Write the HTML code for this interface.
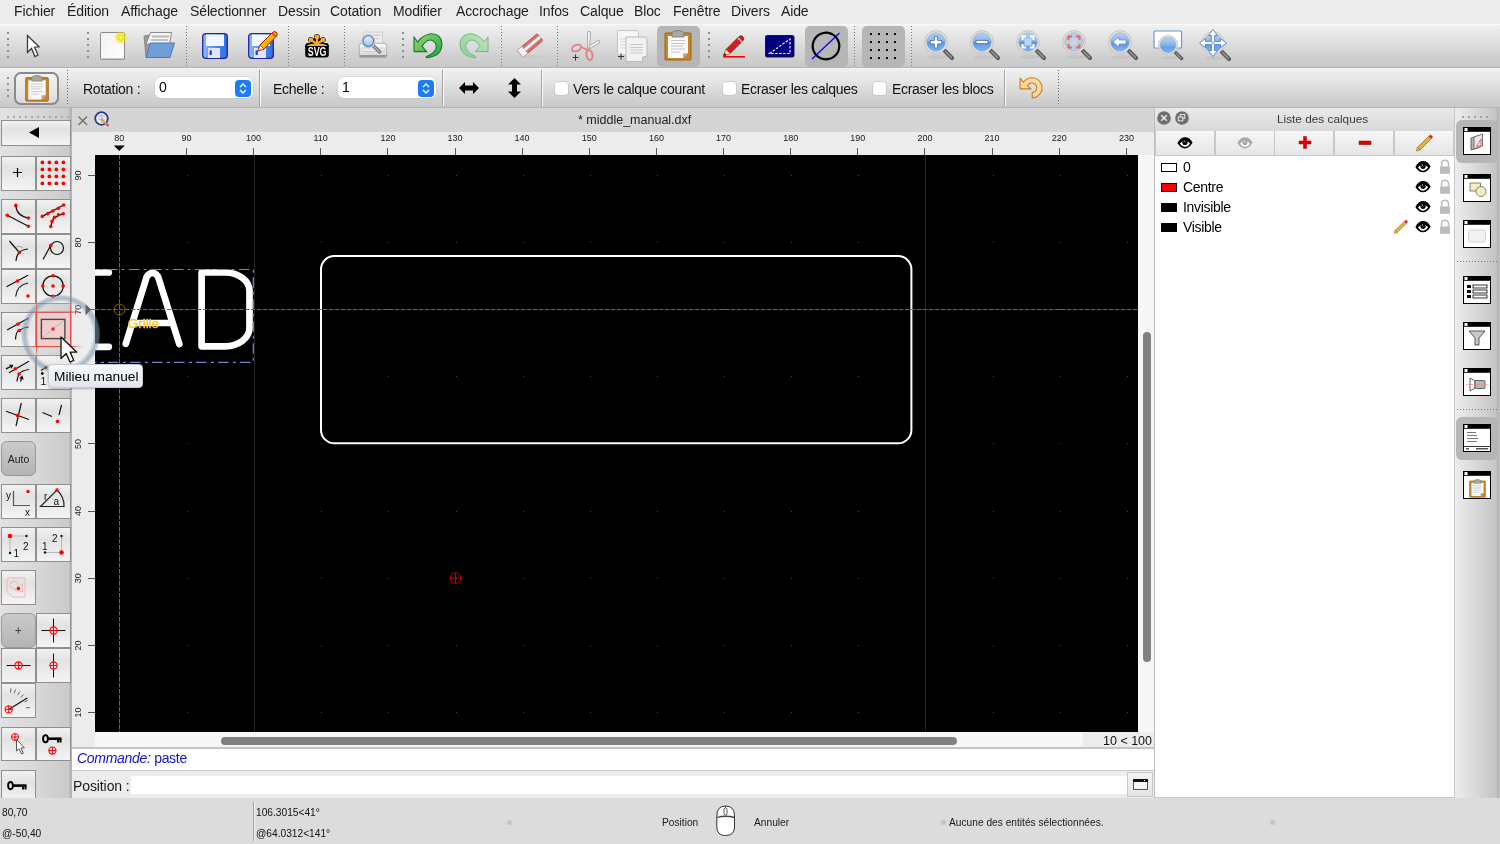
<!DOCTYPE html><html><head><meta charset="utf-8"><style>
html,body{margin:0;padding:0;width:1500px;height:844px;overflow:hidden;background:#e9e9e9;font-family:"Liberation Sans",sans-serif;position:relative}
.t,svg{will-change:transform}
</style></head><body>
<div style="position:absolute;left:0px;top:0px;width:1500px;height:24px;background:#ececec"></div>
<div class="t" style="position:absolute;left:14.3px;top:4px;font-size:14px;line-height:1;white-space:nowrap;letter-spacing:-0.12px;color:#1d1d1d">Fichier</div>
<div class="t" style="position:absolute;left:66.7px;top:4px;font-size:14px;line-height:1;white-space:nowrap;letter-spacing:-0.12px;color:#1d1d1d">Édition</div>
<div class="t" style="position:absolute;left:120.7px;top:4px;font-size:14px;line-height:1;white-space:nowrap;letter-spacing:-0.12px;color:#1d1d1d">Affichage</div>
<div class="t" style="position:absolute;left:190.3px;top:4px;font-size:14px;line-height:1;white-space:nowrap;letter-spacing:-0.12px;color:#1d1d1d">Sélectionner</div>
<div class="t" style="position:absolute;left:277.7px;top:4px;font-size:14px;line-height:1;white-space:nowrap;letter-spacing:-0.12px;color:#1d1d1d">Dessin</div>
<div class="t" style="position:absolute;left:330.3px;top:4px;font-size:14px;line-height:1;white-space:nowrap;letter-spacing:-0.12px;color:#1d1d1d">Cotation</div>
<div class="t" style="position:absolute;left:393.3px;top:4px;font-size:14px;line-height:1;white-space:nowrap;letter-spacing:-0.12px;color:#1d1d1d">Modifier</div>
<div class="t" style="position:absolute;left:455.7px;top:4px;font-size:14px;line-height:1;white-space:nowrap;letter-spacing:-0.12px;color:#1d1d1d">Accrochage</div>
<div class="t" style="position:absolute;left:539.3px;top:4px;font-size:14px;line-height:1;white-space:nowrap;letter-spacing:-0.12px;color:#1d1d1d">Infos</div>
<div class="t" style="position:absolute;left:580px;top:4px;font-size:14px;line-height:1;white-space:nowrap;letter-spacing:-0.12px;color:#1d1d1d">Calque</div>
<div class="t" style="position:absolute;left:634.3px;top:4px;font-size:14px;line-height:1;white-space:nowrap;letter-spacing:-0.12px;color:#1d1d1d">Bloc</div>
<div class="t" style="position:absolute;left:673.3px;top:4px;font-size:14px;line-height:1;white-space:nowrap;letter-spacing:-0.12px;color:#1d1d1d">Fenêtre</div>
<div class="t" style="position:absolute;left:731px;top:4px;font-size:14px;line-height:1;white-space:nowrap;letter-spacing:-0.12px;color:#1d1d1d">Divers</div>
<div class="t" style="position:absolute;left:781px;top:4px;font-size:14px;line-height:1;white-space:nowrap;letter-spacing:-0.12px;color:#1d1d1d">Aide</div>
<div style="position:absolute;left:0px;top:24px;width:1500px;height:43px;background:linear-gradient(#f0f0f0,#e4e4e4 30%,#d2d2d2 70%,#c8c8c8);border-top:1px solid #f8f8f8;box-sizing:border-box"></div>
<div style="position:absolute;left:0px;top:67px;width:1500px;height:1px;background:#b4b4b4"></div>
<div style="position:absolute;left:0px;top:68px;width:1500px;height:39px;background:linear-gradient(#f0f0f0,#e6e6e6 30%,#d4d4d4 70%,#c8c8c8);border-top:1px solid #f4f4f4;box-sizing:border-box"></div>
<div style="position:absolute;left:0px;top:107px;width:1500px;height:1px;background:#b6b6b6"></div>
<div style="position:absolute;left:7px;top:32px;width:2px;height:2px;background:#8e8e8e"></div>
<div style="position:absolute;left:7px;top:38px;width:2px;height:2px;background:#8e8e8e"></div>
<div style="position:absolute;left:7px;top:44px;width:2px;height:2px;background:#8e8e8e"></div>
<div style="position:absolute;left:7px;top:50px;width:2px;height:2px;background:#8e8e8e"></div>
<div style="position:absolute;left:7px;top:56px;width:2px;height:2px;background:#8e8e8e"></div>
<svg style="position:absolute;left:25px;top:33px;" width="16" height="26" viewBox="0 0 16 26"><path d="M2.5,2.5 L2.5,19.5 L6.5,15.5 L10,23.5 L13,22 L9.5,14.2 L14,13.8 Z" fill="#fff" stroke="#3a3a3a" stroke-width="1.3" stroke-linejoin="miter"/></svg>
<div style="position:absolute;left:87px;top:32px;width:2px;height:2px;background:#8e8e8e"></div>
<div style="position:absolute;left:87px;top:38px;width:2px;height:2px;background:#8e8e8e"></div>
<div style="position:absolute;left:87px;top:44px;width:2px;height:2px;background:#8e8e8e"></div>
<div style="position:absolute;left:87px;top:50px;width:2px;height:2px;background:#8e8e8e"></div>
<div style="position:absolute;left:87px;top:56px;width:2px;height:2px;background:#8e8e8e"></div>
<svg style="position:absolute;left:98px;top:30px;" width="30" height="32" viewBox="0 0 30 32"><defs><radialGradient id="glow"><stop offset="0" stop-color="#fffde0"/><stop offset="0.35" stop-color="#f4e400"/><stop offset="1" stop-color="#f4e400" stop-opacity="0"/></radialGradient><linearGradient id="pg" x1="0" y1="0" x2="1" y2="1"><stop offset="0" stop-color="#f0f0f0"/><stop offset="1" stop-color="#ffffff"/></linearGradient></defs><rect x="2.5" y="2.5" width="24" height="27" fill="url(#pg)" stroke="#8a8a8a" stroke-width="1" rx="1"/><rect x="3" y="28.5" width="23" height="1.5" fill="#9a9a9a"/><circle cx="23" cy="7.6" r="7" fill="url(#glow)"/></svg>
<svg style="position:absolute;left:141px;top:30px;" width="36" height="30" viewBox="0 0 36 30"><path d="M3,6 L9,5 L10,27 L5,27 Z" fill="#9c9c9c" stroke="#7a7a7a" stroke-width="0.8"/><path d="M9.5,2.5 L30.5,2.5 L28.5,14 L5,14 Z" fill="#f4f4f4" stroke="#8a8a8a" stroke-width="1"/><rect x="11" y="5.5" width="17" height="2" fill="#b8b8b8"/><rect x="10" y="9" width="17" height="2" fill="#c4c4c4"/><path d="M9.5,13 L33.5,13 L29,27.5 L5,27.5 Z" fill="#6e9fd6" stroke="#4a7ab8" stroke-width="1"/></svg>
<svg style="position:absolute;left:186px;top:26px;" width="1" height="41" viewBox="0 0 1 41"><rect x="0" y="0" width="1" height="1" fill="#7a7a7a"/><rect x="0" y="3" width="1" height="1" fill="#7a7a7a"/><rect x="0" y="6" width="1" height="1" fill="#7a7a7a"/><rect x="0" y="9" width="1" height="1" fill="#7a7a7a"/><rect x="0" y="12" width="1" height="1" fill="#7a7a7a"/><rect x="0" y="15" width="1" height="1" fill="#7a7a7a"/><rect x="0" y="18" width="1" height="1" fill="#7a7a7a"/><rect x="0" y="21" width="1" height="1" fill="#7a7a7a"/><rect x="0" y="24" width="1" height="1" fill="#7a7a7a"/><rect x="0" y="27" width="1" height="1" fill="#7a7a7a"/><rect x="0" y="30" width="1" height="1" fill="#7a7a7a"/><rect x="0" y="33" width="1" height="1" fill="#7a7a7a"/><rect x="0" y="36" width="1" height="1" fill="#7a7a7a"/><rect x="0" y="39" width="1" height="1" fill="#7a7a7a"/></svg>
<svg style="position:absolute;left:202px;top:33px" width="26" height="26" viewBox="0 0 26 26"><defs><linearGradient id="fb" x1="0" x2="1"><stop offset="0" stop-color="#8cbcf8"/><stop offset="0.5" stop-color="#4e8ef0"/><stop offset="1" stop-color="#2f6ee6"/></linearGradient></defs><rect x="0.7" y="0.7" width="24.6" height="24.6" rx="3" fill="url(#fb)" stroke="#2424a0" stroke-width="1.3"/><rect x="4" y="1.5" width="18" height="11.5" fill="#f4f6ff"/><rect x="6" y="15" width="12" height="10" fill="#e4e4ec"/><rect x="7.6" y="17.4" width="2.2" height="4.6" fill="#1e3ee0"/></svg>
<svg style="position:absolute;left:248px;top:33px" width="26" height="26" viewBox="0 0 26 26"><defs><linearGradient id="fb" x1="0" x2="1"><stop offset="0" stop-color="#8cbcf8"/><stop offset="0.5" stop-color="#4e8ef0"/><stop offset="1" stop-color="#2f6ee6"/></linearGradient></defs><rect x="0.7" y="0.7" width="24.6" height="24.6" rx="3" fill="url(#fb)" stroke="#2424a0" stroke-width="1.3"/><rect x="4" y="1.5" width="18" height="11.5" fill="#f4f6ff"/><rect x="6" y="15" width="12" height="10" fill="#e4e4ec"/><rect x="7.6" y="17.4" width="2.2" height="4.6" fill="#1e3ee0"/></svg>
<svg style="position:absolute;left:256px;top:30px;" width="22" height="24" viewBox="0 0 22 24"><path d="M2,21 L4,15 L17,2 Q19,1 20.5,2.5 Q22,4 20.5,6 L8,19 Z" fill="#f7b500" stroke="#a02000" stroke-width="1"/><path d="M2,21 L4,15 L8,19 Z" fill="#f5e0c0" stroke="#a02000" stroke-width="0.6"/><path d="M16,3 L20,7" stroke="#e05030" stroke-width="2"/></svg>
<svg style="position:absolute;left:288px;top:26px;" width="1" height="41" viewBox="0 0 1 41"><rect x="0" y="0" width="1" height="1" fill="#7a7a7a"/><rect x="0" y="3" width="1" height="1" fill="#7a7a7a"/><rect x="0" y="6" width="1" height="1" fill="#7a7a7a"/><rect x="0" y="9" width="1" height="1" fill="#7a7a7a"/><rect x="0" y="12" width="1" height="1" fill="#7a7a7a"/><rect x="0" y="15" width="1" height="1" fill="#7a7a7a"/><rect x="0" y="18" width="1" height="1" fill="#7a7a7a"/><rect x="0" y="21" width="1" height="1" fill="#7a7a7a"/><rect x="0" y="24" width="1" height="1" fill="#7a7a7a"/><rect x="0" y="27" width="1" height="1" fill="#7a7a7a"/><rect x="0" y="30" width="1" height="1" fill="#7a7a7a"/><rect x="0" y="33" width="1" height="1" fill="#7a7a7a"/><rect x="0" y="36" width="1" height="1" fill="#7a7a7a"/><rect x="0" y="39" width="1" height="1" fill="#7a7a7a"/></svg>
<svg style="position:absolute;left:302px;top:30px;" width="30" height="30" viewBox="0 0 30 30"><rect x="3.2" y="13" width="23.6" height="14.5" rx="3" fill="#000"/><g stroke="#000" stroke-width="5.6" stroke-linecap="round"><line x1="15" y1="14" x2="8.9" y2="9.9"/><line x1="15" y1="14" x2="15" y2="6.9"/><line x1="15" y1="14" x2="20.9" y2="9.9"/></g><path d="M2.8,17 Q4,12.5 15,12 Q26,12.5 27.2,17 Z" fill="#000"/><g stroke="#f6aa32" stroke-width="2.3" stroke-linecap="round"><line x1="15" y1="14" x2="8.9" y2="9.9"/><line x1="15" y1="14" x2="15" y2="6.9"/><line x1="15" y1="14" x2="20.9" y2="9.9"/></g><circle cx="8.9" cy="9.9" r="2.4" fill="#f6aa32"/><circle cx="15" cy="6.9" r="2.4" fill="#f6aa32"/><circle cx="20.9" cy="9.9" r="2.4" fill="#f6aa32"/><path d="M4.6,16.1 Q6,14 15,13.6 Q24,14 25.6,16.1 Z" fill="#f6aa32"/><text x="15.1" y="26.3" text-anchor="middle" font-family="Liberation Sans" font-weight="bold" font-size="12.8" fill="#fff" textLength="18.8" lengthAdjust="spacingAndGlyphs">SVG</text></svg>
<svg style="position:absolute;left:344px;top:26px;" width="1" height="41" viewBox="0 0 1 41"><rect x="0" y="0" width="1" height="1" fill="#7a7a7a"/><rect x="0" y="3" width="1" height="1" fill="#7a7a7a"/><rect x="0" y="6" width="1" height="1" fill="#7a7a7a"/><rect x="0" y="9" width="1" height="1" fill="#7a7a7a"/><rect x="0" y="12" width="1" height="1" fill="#7a7a7a"/><rect x="0" y="15" width="1" height="1" fill="#7a7a7a"/><rect x="0" y="18" width="1" height="1" fill="#7a7a7a"/><rect x="0" y="21" width="1" height="1" fill="#7a7a7a"/><rect x="0" y="24" width="1" height="1" fill="#7a7a7a"/><rect x="0" y="27" width="1" height="1" fill="#7a7a7a"/><rect x="0" y="30" width="1" height="1" fill="#7a7a7a"/><rect x="0" y="33" width="1" height="1" fill="#7a7a7a"/><rect x="0" y="36" width="1" height="1" fill="#7a7a7a"/><rect x="0" y="39" width="1" height="1" fill="#7a7a7a"/></svg>
<svg style="position:absolute;left:356px;top:30px;" width="34" height="32" viewBox="0 0 34 32"><defs><linearGradient id="prb" x1="0" y1="0" x2="0" y2="1"><stop offset="0" stop-color="#fafafa"/><stop offset="0.55" stop-color="#e8e8e8"/><stop offset="1" stop-color="#c8c8c8"/></linearGradient><linearGradient id="lens" x1="0" y1="0" x2="0" y2="1"><stop offset="0" stop-color="#e8f0fa"/><stop offset="1" stop-color="#a8c0dc"/></linearGradient></defs><rect x="7.2" y="2.1" width="19.3" height="13" rx="1" fill="#ececec" stroke="#c4c4c4" stroke-width="0.8"/><rect x="17" y="4.5" width="7" height="1.5" fill="#cfcfcf"/><rect x="17" y="8" width="6" height="1.5" fill="#d4d4d4"/><path d="M3.2,16 Q3.2,13.3 6,13.3 L28,13.3 Q30.7,13.3 30.7,16 L30.7,25.5 Q30.7,27.3 28.5,27.3 L5.5,27.3 Q3.2,27.3 3.2,25.5 Z" fill="url(#prb)" stroke="#a0a0a0" stroke-width="0.8"/><rect x="5" y="18" width="24" height="3.5" rx="1.5" fill="none" stroke="#c8c8c8" stroke-width="0.8"/><rect x="3.6" y="25" width="26.8" height="2.3" fill="#9a9a9a"/><line x1="17" y1="15.5" x2="23.5" y2="21.8" stroke="#707070" stroke-width="3.6" stroke-linecap="round"/><line x1="17" y1="15.5" x2="23.5" y2="21.8" stroke="#b4b4b4" stroke-width="1.6" stroke-linecap="round"/><circle cx="12.3" cy="11" r="6.6" fill="#f0f0f0" stroke="#b8b8b8" stroke-width="0.8"/><circle cx="12.3" cy="11" r="5.3" fill="url(#lens)" stroke="#4a84cc" stroke-width="1.2"/></svg>
<div style="position:absolute;left:402px;top:32px;width:2px;height:2px;background:#8e8e8e"></div>
<div style="position:absolute;left:402px;top:38px;width:2px;height:2px;background:#8e8e8e"></div>
<div style="position:absolute;left:402px;top:44px;width:2px;height:2px;background:#8e8e8e"></div>
<div style="position:absolute;left:402px;top:50px;width:2px;height:2px;background:#8e8e8e"></div>
<div style="position:absolute;left:402px;top:56px;width:2px;height:2px;background:#8e8e8e"></div>
<svg style="position:absolute;left:410px;top:30px;" width="36" height="32" viewBox="0 0 36 32"><defs><linearGradient id="ug" x1="0" y1="0" x2="1" y2="1"><stop offset="0" stop-color="#98d878"/><stop offset="1" stop-color="#28a040"/></linearGradient></defs><path d="M4,7.2 L7.8,12 Q12,5.5 20.5,3.8 Q31,3.5 32,13.5 Q32,23 24,26 Q20,27.6 16.5,27.8 Q15.8,27.2 16.3,26.6 Q23,24.5 26,19 Q27.5,12 21,10 Q16,9.5 12,16.4 L16.7,21.6 L4,21.6 Z" fill="url(#ug)" stroke="#127a2a" stroke-width="1.1" stroke-linejoin="miter"/></svg>
<svg style="position:absolute;left:456px;top:30px;" width="36" height="32" viewBox="0 0 36 32"><defs><linearGradient id="rg" x1="0" y1="0" x2="1" y2="1"><stop offset="0" stop-color="#c4e8c0"/><stop offset="1" stop-color="#8ccc96"/></linearGradient></defs><g transform="translate(36,0) scale(-1,1)"><path d="M4,7.2 L7.8,12 Q12,5.5 20.5,3.8 Q31,3.5 32,13.5 Q32,23 24,26 Q20,27.6 16.5,27.8 Q15.8,27.2 16.3,26.6 Q23,24.5 26,19 Q27.5,12 21,10 Q16,9.5 12,16.4 L16.7,21.6 L4,21.6 Z" fill="url(#rg)" stroke="#6cb87c" stroke-width="1"/></g></svg>
<svg style="position:absolute;left:501px;top:26px;" width="1" height="41" viewBox="0 0 1 41"><rect x="0" y="0" width="1" height="1" fill="#7a7a7a"/><rect x="0" y="3" width="1" height="1" fill="#7a7a7a"/><rect x="0" y="6" width="1" height="1" fill="#7a7a7a"/><rect x="0" y="9" width="1" height="1" fill="#7a7a7a"/><rect x="0" y="12" width="1" height="1" fill="#7a7a7a"/><rect x="0" y="15" width="1" height="1" fill="#7a7a7a"/><rect x="0" y="18" width="1" height="1" fill="#7a7a7a"/><rect x="0" y="21" width="1" height="1" fill="#7a7a7a"/><rect x="0" y="24" width="1" height="1" fill="#7a7a7a"/><rect x="0" y="27" width="1" height="1" fill="#7a7a7a"/><rect x="0" y="30" width="1" height="1" fill="#7a7a7a"/><rect x="0" y="33" width="1" height="1" fill="#7a7a7a"/><rect x="0" y="36" width="1" height="1" fill="#7a7a7a"/><rect x="0" y="39" width="1" height="1" fill="#7a7a7a"/></svg>
<svg style="position:absolute;left:516px;top:32px;" width="30" height="28" viewBox="0 0 30 28"><ellipse cx="15" cy="24.5" rx="12" ry="1.6" fill="#c8c8c8"/><g transform="rotate(-40 13 15)"><rect x="2" y="10" width="26" height="9" rx="1.5" fill="#d86c6c" stroke="#b85050" stroke-width="0.8"/><rect x="2" y="13" width="26" height="3" fill="#f4f4f4"/><rect x="2" y="10" width="6" height="9" fill="#f2f2f2" stroke="#b0b0b0" stroke-width="0.8"/></g></svg>
<svg style="position:absolute;left:557px;top:26px;" width="1" height="41" viewBox="0 0 1 41"><rect x="0" y="0" width="1" height="1" fill="#7a7a7a"/><rect x="0" y="3" width="1" height="1" fill="#7a7a7a"/><rect x="0" y="6" width="1" height="1" fill="#7a7a7a"/><rect x="0" y="9" width="1" height="1" fill="#7a7a7a"/><rect x="0" y="12" width="1" height="1" fill="#7a7a7a"/><rect x="0" y="15" width="1" height="1" fill="#7a7a7a"/><rect x="0" y="18" width="1" height="1" fill="#7a7a7a"/><rect x="0" y="21" width="1" height="1" fill="#7a7a7a"/><rect x="0" y="24" width="1" height="1" fill="#7a7a7a"/><rect x="0" y="27" width="1" height="1" fill="#7a7a7a"/><rect x="0" y="30" width="1" height="1" fill="#7a7a7a"/><rect x="0" y="33" width="1" height="1" fill="#7a7a7a"/><rect x="0" y="36" width="1" height="1" fill="#7a7a7a"/><rect x="0" y="39" width="1" height="1" fill="#7a7a7a"/></svg>
<svg style="position:absolute;left:568px;top:29px;" width="34" height="32" viewBox="0 0 34 32"><path d="M20,3 L22,3 L21,20" fill="none" stroke="#9a9a9a" stroke-width="1"/><path d="M19.5,3 Q21,1.5 22.5,3 L21.5,19 L19.5,19 Z" fill="#f4f4f4" stroke="#9c9c9c" stroke-width="0.8"/><path d="M21,17 L31,11 L32,13.5 L22,19.5 Z" fill="#f4f4f4" stroke="#9c9c9c" stroke-width="0.8"/><ellipse cx="8.5" cy="19" rx="4.8" ry="3" transform="rotate(-25 8.5 19)" fill="none" stroke="#e08080" stroke-width="1.8"/><ellipse cx="21.5" cy="26" rx="3" ry="5" transform="rotate(-10 21.5 26)" fill="none" stroke="#e08080" stroke-width="1.8"/><path d="M12.5,18 L19,20.5 L20,21.5" stroke="#e08080" stroke-width="1.8" fill="none"/><path d="M4.5,28.5 L10.5,28.5 M7.5,25.5 L7.5,31.5" stroke="#333" stroke-width="1"/></svg>
<svg style="position:absolute;left:615px;top:29px;" width="34" height="34" viewBox="0 0 34 34"><path d="M2.5,1.5 L21,1.5 Q23.5,1.5 23.5,4 L23.5,26 L2.5,26 Z" fill="#f6f6f6" stroke="#c4c4c4" stroke-width="1"/><g stroke="#d8d8d8" stroke-width="1"><line x1="5" y1="10" x2="18" y2="10"/><line x1="5" y1="13" x2="18" y2="13"/><line x1="5" y1="16" x2="18" y2="16"/><line x1="5" y1="19" x2="18" y2="19"/></g><path d="M11,8 L30,8 Q32,8 32,10 L32,27 L27.5,32.5 L11,32.5 Z" fill="#f2f2f2" stroke="#b8b8b8" stroke-width="1"/><path d="M27.5,32.5 L27.5,28 L32,27" fill="#d0d0d0" stroke="#b0b0b0" stroke-width="0.8"/><g stroke="#c8c8c8" stroke-width="1"><line x1="15" y1="15.5" x2="28" y2="15.5"/><line x1="15" y1="18.5" x2="28" y2="18.5"/><line x1="15" y1="21" x2="28" y2="21"/><line x1="15" y1="24" x2="28" y2="24"/></g><path d="M3,27.5 L9,27.5 M6,24.5 L6,30.5" stroke="#333" stroke-width="1"/></svg>
<div style="position:absolute;left:657px;top:26px;width:43px;height:41px;background:#b6b6b6;border-radius:5px"></div>
<svg style="position:absolute;left:664px;top:30px" width="28" height="31" viewBox="0 0 28 31"><rect x="1" y="3" width="26" height="27" rx="1" fill="#c8862a" stroke="#9c6410" stroke-width="1"/><path d="M4,6 L24,6 L24,23 L19,28 L4,28 Z" fill="#fafafa"/><path d="M19,28 L19,23.5 L24,23" fill="#a8a8a8"/><g stroke="#c4c4c4" stroke-width="1"><line x1="7" y1="10.5" x2="21" y2="10.5"/><line x1="7" y1="13.5" x2="21" y2="13.5"/><line x1="7" y1="16" x2="19" y2="16"/><line x1="7" y1="19" x2="21" y2="19"/><line x1="7" y1="22" x2="16" y2="22"/></g><path d="M8,3 Q8,1.5 10,1.5 L11.5,1.5 L11.5,0.5 L16.5,0.5 L16.5,1.5 L18,1.5 Q20,1.5 20,3 L20,7 L8,7 Z" fill="#a8a898" stroke="#7a7a70" stroke-width="0.8"/></svg>
<div style="position:absolute;left:708px;top:32px;width:2px;height:2px;background:#8e8e8e"></div>
<div style="position:absolute;left:708px;top:38px;width:2px;height:2px;background:#8e8e8e"></div>
<div style="position:absolute;left:708px;top:44px;width:2px;height:2px;background:#8e8e8e"></div>
<div style="position:absolute;left:708px;top:50px;width:2px;height:2px;background:#8e8e8e"></div>
<div style="position:absolute;left:708px;top:56px;width:2px;height:2px;background:#8e8e8e"></div>
<svg style="position:absolute;left:720px;top:33px;" width="28" height="26" viewBox="0 0 28 26"><path d="M3.5,23 L6,16.5 L19,3.5 Q21,1.8 23,3.8 Q24.8,5.8 23,7.5 L10,20.5 Z" fill="#d81828" stroke="#6a3a10" stroke-width="0.9"/><path d="M3.5,23 L6,16.5 L10,20.5 Z" fill="#f4d0b0"/><path d="M3.5,23 L4.5,20 L6.5,22 Z" fill="#111"/><line x1="18" y1="5" x2="22" y2="9" stroke="#d0d0d0" stroke-width="1.5"/><rect x="3" y="23" width="22" height="1.6" fill="#ff0000"/></svg>
<svg style="position:absolute;left:765px;top:35px;" width="30" height="23" viewBox="0 0 30 23"><rect x="0.5" y="0.5" width="28.5" height="21.5" rx="1.5" fill="#000080" stroke="#1a1a2a" stroke-width="1"/><path d="M4.5,18.5 L25,4 L25,18.5 Z" fill="none" stroke="#fff" stroke-width="1.1" stroke-dasharray="2.5,1.5"/></svg>
<div style="position:absolute;left:805px;top:26px;width:43px;height:41px;background:#b6b6b6;border-radius:5px"></div>
<svg style="position:absolute;left:810px;top:31px;" width="32" height="30" viewBox="0 0 32 30"><circle cx="16" cy="15" r="13.3" fill="none" stroke="#000" stroke-width="2.2" stroke-dasharray="3.5,0" /><line x1="2" y1="28" x2="29.5" y2="2" stroke="#0000e8" stroke-width="1.2"/></svg>
<svg style="position:absolute;left:854px;top:26px;" width="1" height="41" viewBox="0 0 1 41"><rect x="0" y="0" width="1" height="1" fill="#7a7a7a"/><rect x="0" y="3" width="1" height="1" fill="#7a7a7a"/><rect x="0" y="6" width="1" height="1" fill="#7a7a7a"/><rect x="0" y="9" width="1" height="1" fill="#7a7a7a"/><rect x="0" y="12" width="1" height="1" fill="#7a7a7a"/><rect x="0" y="15" width="1" height="1" fill="#7a7a7a"/><rect x="0" y="18" width="1" height="1" fill="#7a7a7a"/><rect x="0" y="21" width="1" height="1" fill="#7a7a7a"/><rect x="0" y="24" width="1" height="1" fill="#7a7a7a"/><rect x="0" y="27" width="1" height="1" fill="#7a7a7a"/><rect x="0" y="30" width="1" height="1" fill="#7a7a7a"/><rect x="0" y="33" width="1" height="1" fill="#7a7a7a"/><rect x="0" y="36" width="1" height="1" fill="#7a7a7a"/><rect x="0" y="39" width="1" height="1" fill="#7a7a7a"/></svg>
<div style="position:absolute;left:862px;top:26px;width:43px;height:41px;background:#b6b6b6;border-radius:5px"></div>
<svg style="position:absolute;left:870px;top:33px;" width="28" height="28" viewBox="0 0 28 28"><rect x="0" y="0" width="2" height="2" fill="#000"/><rect x="8" y="0" width="2" height="2" fill="#000"/><rect x="16" y="0" width="2" height="2" fill="#000"/><rect x="24" y="0" width="2" height="2" fill="#000"/><rect x="0" y="8" width="2" height="2" fill="#000"/><rect x="8" y="8" width="2" height="2" fill="#000"/><rect x="16" y="8" width="2" height="2" fill="#000"/><rect x="24" y="8" width="2" height="2" fill="#000"/><rect x="0" y="16" width="2" height="2" fill="#000"/><rect x="8" y="16" width="2" height="2" fill="#000"/><rect x="16" y="16" width="2" height="2" fill="#000"/><rect x="24" y="16" width="2" height="2" fill="#000"/><rect x="0" y="24" width="2" height="2" fill="#000"/><rect x="8" y="24" width="2" height="2" fill="#000"/><rect x="16" y="24" width="2" height="2" fill="#000"/><rect x="24" y="24" width="2" height="2" fill="#000"/></svg>
<svg style="position:absolute;left:911px;top:26px;" width="1" height="41" viewBox="0 0 1 41"><rect x="0" y="0" width="1" height="1" fill="#7a7a7a"/><rect x="0" y="3" width="1" height="1" fill="#7a7a7a"/><rect x="0" y="6" width="1" height="1" fill="#7a7a7a"/><rect x="0" y="9" width="1" height="1" fill="#7a7a7a"/><rect x="0" y="12" width="1" height="1" fill="#7a7a7a"/><rect x="0" y="15" width="1" height="1" fill="#7a7a7a"/><rect x="0" y="18" width="1" height="1" fill="#7a7a7a"/><rect x="0" y="21" width="1" height="1" fill="#7a7a7a"/><rect x="0" y="24" width="1" height="1" fill="#7a7a7a"/><rect x="0" y="27" width="1" height="1" fill="#7a7a7a"/><rect x="0" y="30" width="1" height="1" fill="#7a7a7a"/><rect x="0" y="33" width="1" height="1" fill="#7a7a7a"/><rect x="0" y="36" width="1" height="1" fill="#7a7a7a"/><rect x="0" y="39" width="1" height="1" fill="#7a7a7a"/></svg>
<svg style="position:absolute;left:920px;top:26px;" width="36" height="36" viewBox="0 0 36 36"><defs><linearGradient id="zb" x1="0" y1="0" x2="0" y2="1"><stop offset="0" stop-color="#b8d0f0"/><stop offset="0.45" stop-color="#8cb4ec"/><stop offset="0.52" stop-color="#5e96e0"/><stop offset="1" stop-color="#80b8f0"/></linearGradient></defs><g transform="translate(16,16) scale(1.0) translate(-16,-16)"><ellipse cx="18" cy="31" rx="10" ry="1.8" fill="#b8b8b8" opacity="0.5"/><line x1="25" y1="25" x2="32" y2="32" stroke="#5e5e5e" stroke-width="4.2" stroke-linecap="round"/><line x1="25.5" y1="25.5" x2="31.5" y2="31.5" stroke="#9a9a9a" stroke-width="1.2" stroke-linecap="round"/><circle cx="16" cy="16" r="11.3" fill="#e8e8e0" stroke="#b8b8ac" stroke-width="0.8"/><circle cx="16" cy="16" r="9.3" fill="url(#zb)" stroke="#8aa8cc" stroke-width="0.6"/><g transform="translate(4,4)"><path d="M10.3,6.5 h3.4 v4 h4 v3.4 h-4 v4 h-3.4 v-4 h-4 v-3.4 h4 Z" fill="#fff" stroke="#2a5aa0" stroke-width="0.7"/></g></g></svg>
<svg style="position:absolute;left:966px;top:26px;" width="36" height="36" viewBox="0 0 36 36"><defs><linearGradient id="zb" x1="0" y1="0" x2="0" y2="1"><stop offset="0" stop-color="#b8d0f0"/><stop offset="0.45" stop-color="#8cb4ec"/><stop offset="0.52" stop-color="#5e96e0"/><stop offset="1" stop-color="#80b8f0"/></linearGradient></defs><g transform="translate(16,16) scale(1.0) translate(-16,-16)"><ellipse cx="18" cy="31" rx="10" ry="1.8" fill="#b8b8b8" opacity="0.5"/><line x1="25" y1="25" x2="32" y2="32" stroke="#5e5e5e" stroke-width="4.2" stroke-linecap="round"/><line x1="25.5" y1="25.5" x2="31.5" y2="31.5" stroke="#9a9a9a" stroke-width="1.2" stroke-linecap="round"/><circle cx="16" cy="16" r="11.3" fill="#e8e8e0" stroke="#b8b8ac" stroke-width="0.8"/><circle cx="16" cy="16" r="9.3" fill="url(#zb)" stroke="#8aa8cc" stroke-width="0.6"/><g transform="translate(4,4)"><rect x="6" y="10.3" width="12" height="3.4" fill="#fff" stroke="#2a5aa0" stroke-width="0.7"/></g></g></svg>
<svg style="position:absolute;left:1012px;top:26px;" width="36" height="36" viewBox="0 0 36 36"><defs><linearGradient id="zb" x1="0" y1="0" x2="0" y2="1"><stop offset="0" stop-color="#b8d0f0"/><stop offset="0.45" stop-color="#8cb4ec"/><stop offset="0.52" stop-color="#5e96e0"/><stop offset="1" stop-color="#80b8f0"/></linearGradient></defs><g transform="translate(16,16) scale(1.0) translate(-16,-16)"><ellipse cx="18" cy="31" rx="10" ry="1.8" fill="#b8b8b8" opacity="0.5"/><line x1="25" y1="25" x2="32" y2="32" stroke="#5e5e5e" stroke-width="4.2" stroke-linecap="round"/><line x1="25.5" y1="25.5" x2="31.5" y2="31.5" stroke="#9a9a9a" stroke-width="1.2" stroke-linecap="round"/><circle cx="16" cy="16" r="11.3" fill="#e8e8e0" stroke="#b8b8ac" stroke-width="0.8"/><circle cx="16" cy="16" r="9.3" fill="url(#zb)" stroke="#8aa8cc" stroke-width="0.6"/><g transform="translate(4,4)"><rect x="8.5" y="8.5" width="7" height="7" fill="#c0d4f0"/><path d="M6.5,10 v-3.5 h3.5 M14,6.5 h3.5 v3.5 M17.5,14 v3.5 h-3.5 M10,17.5 h-3.5 v-3.5" fill="none" stroke="#fff" stroke-width="2"/></g></g></svg>
<svg style="position:absolute;left:1058px;top:26px;" width="36" height="36" viewBox="0 0 36 36"><defs><linearGradient id="zb" x1="0" y1="0" x2="0" y2="1"><stop offset="0" stop-color="#b8d0f0"/><stop offset="0.45" stop-color="#8cb4ec"/><stop offset="0.52" stop-color="#5e96e0"/><stop offset="1" stop-color="#80b8f0"/></linearGradient></defs><g transform="translate(16,16) scale(1.0) translate(-16,-16)"><ellipse cx="18" cy="31" rx="10" ry="1.8" fill="#b8b8b8" opacity="0.5"/><line x1="25" y1="25" x2="32" y2="32" stroke="#5e5e5e" stroke-width="4.2" stroke-linecap="round"/><line x1="25.5" y1="25.5" x2="31.5" y2="31.5" stroke="#9a9a9a" stroke-width="1.2" stroke-linecap="round"/><circle cx="16" cy="16" r="11.3" fill="#e8e8e0" stroke="#b8b8ac" stroke-width="0.8"/><circle cx="16" cy="16" r="9.3" fill="#b8cce4" stroke="#8aa8cc" stroke-width="0.6"/><g transform="translate(4,4)"><rect x="8.5" y="8.5" width="7" height="7" fill="#c8d4e4"/><path d="M6.5,10 v-3.5 h3.5 M14,6.5 h3.5 v3.5 M17.5,14 v3.5 h-3.5 M10,17.5 h-3.5 v-3.5" fill="none" stroke="#f06060" stroke-width="2"/></g></g></svg>
<svg style="position:absolute;left:1104px;top:26px;" width="36" height="36" viewBox="0 0 36 36"><defs><linearGradient id="zb" x1="0" y1="0" x2="0" y2="1"><stop offset="0" stop-color="#b8d0f0"/><stop offset="0.45" stop-color="#8cb4ec"/><stop offset="0.52" stop-color="#5e96e0"/><stop offset="1" stop-color="#80b8f0"/></linearGradient></defs><g transform="translate(16,16) scale(1.0) translate(-16,-16)"><ellipse cx="18" cy="31" rx="10" ry="1.8" fill="#b8b8b8" opacity="0.5"/><line x1="25" y1="25" x2="32" y2="32" stroke="#5e5e5e" stroke-width="4.2" stroke-linecap="round"/><line x1="25.5" y1="25.5" x2="31.5" y2="31.5" stroke="#9a9a9a" stroke-width="1.2" stroke-linecap="round"/><circle cx="16" cy="16" r="11.3" fill="#e8e8e0" stroke="#b8b8ac" stroke-width="0.8"/><circle cx="16" cy="16" r="9.3" fill="url(#zb)" stroke="#8aa8cc" stroke-width="0.6"/><g transform="translate(4,4)"><path d="M5,12 L11,7 L11,10 L18,10 L18,14 L11,14 L11,17 Z" fill="#fff" stroke="#4a7ab8" stroke-width="0.6"/></g></g></svg>
<svg style="position:absolute;left:1153px;top:30px;" width="30" height="20" viewBox="0 0 30 20"><rect x="1" y="1" width="27.5" height="17" fill="#fff" stroke="#6a9ad8" stroke-width="1.2" rx="1"/></svg>
<svg style="position:absolute;left:1152.4px;top:28.6px;" width="36" height="36" viewBox="0 0 36 36"><defs><linearGradient id="zb" x1="0" y1="0" x2="0" y2="1"><stop offset="0" stop-color="#b8d0f0"/><stop offset="0.45" stop-color="#8cb4ec"/><stop offset="0.52" stop-color="#5e96e0"/><stop offset="1" stop-color="#80b8f0"/></linearGradient></defs><g transform="translate(16,16) scale(0.85) translate(-16,-16)"><ellipse cx="18" cy="31" rx="10" ry="1.8" fill="#b8b8b8" opacity="0.5"/><line x1="25" y1="25" x2="32" y2="32" stroke="#5e5e5e" stroke-width="4.2" stroke-linecap="round"/><line x1="25.5" y1="25.5" x2="31.5" y2="31.5" stroke="#9a9a9a" stroke-width="1.2" stroke-linecap="round"/><circle cx="16" cy="16" r="11.3" fill="#e8e8e0" stroke="#b8b8ac" stroke-width="0.8"/><circle cx="16" cy="16" r="9.3" fill="url(#zb)" stroke="#8aa8cc" stroke-width="0.6"/><g transform="translate(4,4)"><rect x="3" y="12.5" width="18" height="1" fill="#9cc0ec"/></g></g></svg>
<svg style="position:absolute;left:1197px;top:27px;" width="36" height="36" viewBox="0 0 36 36"><defs><linearGradient id="zb" x1="0" y1="0" x2="0" y2="1"><stop offset="0" stop-color="#b8d0f0"/><stop offset="0.45" stop-color="#8cb4ec"/><stop offset="0.52" stop-color="#5e96e0"/><stop offset="1" stop-color="#80b8f0"/></linearGradient></defs><g transform="translate(16,16) scale(1.0) translate(-16,-16)"><ellipse cx="18" cy="31" rx="10" ry="1.8" fill="#b8b8b8" opacity="0.5"/><line x1="25" y1="25" x2="32" y2="32" stroke="#5e5e5e" stroke-width="4.2" stroke-linecap="round"/><line x1="25.5" y1="25.5" x2="31.5" y2="31.5" stroke="#9a9a9a" stroke-width="1.2" stroke-linecap="round"/><circle cx="16" cy="16" r="11.3" fill="#e8e8e0" stroke="#b8b8ac" stroke-width="0.8"/><circle cx="16" cy="16" r="9.3" fill="url(#zb)" stroke="#8aa8cc" stroke-width="0.6"/><g transform="translate(4,4)"></g></g></svg>
<svg style="position:absolute;left:1198px;top:28px;" width="30" height="30" viewBox="0 0 30 30"><path d="M15,1.5 L19.5,7.5 L16.6,7.5 L16.6,13.4 L22.5,13.4 L22.5,10.5 L28.5,15 L22.5,19.5 L22.5,16.6 L16.6,16.6 L16.6,22.5 L19.5,22.5 L15,28.5 L10.5,22.5 L13.4,22.5 L13.4,16.6 L7.5,16.6 L7.5,19.5 L1.5,15 L7.5,10.5 L7.5,13.4 L13.4,13.4 L13.4,7.5 L10.5,7.5 Z" fill="#fff" stroke="#4a80d0" stroke-width="0.9" stroke-linejoin="round"/><rect x="13.4" y="13.4" width="3.2" height="3.2" fill="#a8c4ec"/></svg>
<div style="position:absolute;left:7px;top:77px;width:2px;height:2px;background:#8e8e8e"></div>
<div style="position:absolute;left:7px;top:83px;width:2px;height:2px;background:#8e8e8e"></div>
<div style="position:absolute;left:7px;top:89px;width:2px;height:2px;background:#8e8e8e"></div>
<div style="position:absolute;left:7px;top:95px;width:2px;height:2px;background:#8e8e8e"></div>
<div style="position:absolute;left:14px;top:72px;width:45px;height:33px;border:2px solid #8a8a8a;border-radius:7px;background:linear-gradient(#f4f4f4,#dcdcdc);box-sizing:border-box"></div>
<svg style="position:absolute;left:23px;top:75px" width="28" height="27" viewBox="0 0 28 31"><rect x="1" y="3" width="26" height="27" rx="1" fill="#c8862a" stroke="#9c6410" stroke-width="1"/><path d="M4,6 L24,6 L24,23 L19,28 L4,28 Z" fill="#fafafa"/><path d="M19,28 L19,23.5 L24,23" fill="#a8a8a8"/><g stroke="#c4c4c4" stroke-width="1"><line x1="7" y1="10.5" x2="21" y2="10.5"/><line x1="7" y1="13.5" x2="21" y2="13.5"/><line x1="7" y1="16" x2="19" y2="16"/><line x1="7" y1="19" x2="21" y2="19"/><line x1="7" y1="22" x2="16" y2="22"/></g><path d="M8,3 Q8,1.5 10,1.5 L11.5,1.5 L11.5,0.5 L16.5,0.5 L16.5,1.5 L18,1.5 Q20,1.5 20,3 L20,7 L8,7 Z" fill="#a8a898" stroke="#7a7a70" stroke-width="0.8"/></svg>
<svg style="position:absolute;left:67px;top:70px;" width="1" height="36" viewBox="0 0 1 36"><rect x="0" y="0" width="1" height="1" fill="#6a6a6a"/><rect x="0" y="3" width="1" height="1" fill="#6a6a6a"/><rect x="0" y="6" width="1" height="1" fill="#6a6a6a"/><rect x="0" y="9" width="1" height="1" fill="#6a6a6a"/><rect x="0" y="12" width="1" height="1" fill="#6a6a6a"/><rect x="0" y="15" width="1" height="1" fill="#6a6a6a"/><rect x="0" y="18" width="1" height="1" fill="#6a6a6a"/><rect x="0" y="21" width="1" height="1" fill="#6a6a6a"/><rect x="0" y="24" width="1" height="1" fill="#6a6a6a"/><rect x="0" y="27" width="1" height="1" fill="#6a6a6a"/><rect x="0" y="30" width="1" height="1" fill="#6a6a6a"/><rect x="0" y="33" width="1" height="1" fill="#6a6a6a"/></svg>
<div class="t" style="position:absolute;left:83px;top:82px;font-size:14px;line-height:1;white-space:nowrap;letter-spacing:-0.25px;color:#111">Rotation :</div>
<div style="position:absolute;left:155px;top:77px;width:98px;height:21px;background:#fff;border-radius:6px;box-shadow:0 0 0 0.5px #c8c8c8"></div>
<div class="t" style="position:absolute;left:159px;top:80px;font-size:14px;line-height:1;white-space:nowrap;letter-spacing:-0.37px;color:#000">0</div>
<svg style="position:absolute;left:235px;top:79.5px;" width="16" height="17" viewBox="0 0 16 17"><rect x="0" y="0" width="16" height="17" rx="4" fill="#1a7cf8"/><path d="M5,7 L8,4 L11,7 M5,10 L8,13 L11,10" fill="none" stroke="#fff" stroke-width="1.4"/></svg>
<div style="position:absolute;left:259px;top:70px;width:1px;height:36px;background:#a4a4a4"></div>
<div style="position:absolute;left:260px;top:70px;width:1px;height:36px;background:#fafafa"></div>
<div class="t" style="position:absolute;left:273px;top:82px;font-size:14px;line-height:1;white-space:nowrap;letter-spacing:-0.25px;color:#111">Echelle :</div>
<div style="position:absolute;left:338px;top:77px;width:98px;height:21px;background:#fff;border-radius:6px;box-shadow:0 0 0 0.5px #c8c8c8"></div>
<div class="t" style="position:absolute;left:342px;top:80px;font-size:14px;line-height:1;white-space:nowrap;letter-spacing:-0.37px;color:#000">1</div>
<svg style="position:absolute;left:418px;top:79.5px;" width="16" height="17" viewBox="0 0 16 17"><rect x="0" y="0" width="16" height="17" rx="4" fill="#1a7cf8"/><path d="M5,7 L8,4 L11,7 M5,10 L8,13 L11,10" fill="none" stroke="#fff" stroke-width="1.4"/></svg>
<div style="position:absolute;left:442px;top:70px;width:1px;height:36px;background:#a4a4a4"></div>
<div style="position:absolute;left:443px;top:70px;width:1px;height:36px;background:#fafafa"></div>
<svg style="position:absolute;left:458px;top:80px;" width="22" height="16" viewBox="0 0 22 16"><path d="M1,8 L7,2 L7,5.5 L15,5.5 L15,2 L21,8 L15,14 L15,10.5 L7,10.5 L7,14 Z" fill="#000"/></svg>
<svg style="position:absolute;left:506px;top:77px;" width="17" height="22" viewBox="0 0 17 22"><path d="M8.5,1 L15,7.5 L11,7.5 L11,14.5 L15,14.5 L8.5,21 L2,14.5 L6,14.5 L6,7.5 L2,7.5 Z" fill="#000"/></svg>
<div style="position:absolute;left:541px;top:70px;width:1px;height:36px;background:#a4a4a4"></div>
<div style="position:absolute;left:542px;top:70px;width:1px;height:36px;background:#fafafa"></div>
<div style="position:absolute;left:554.5px;top:82px;width:13px;height:13px;background:#fff;border-radius:3px;box-shadow:0 0 0 0.5px #b8b8b8"></div>
<div class="t" style="position:absolute;left:573px;top:82px;font-size:14px;line-height:1;white-space:nowrap;letter-spacing:-0.3px;color:#111">Vers le calque courant</div>
<div style="position:absolute;left:722.5px;top:82px;width:13px;height:13px;background:#fff;border-radius:3px;box-shadow:0 0 0 0.5px #b8b8b8"></div>
<div class="t" style="position:absolute;left:741px;top:82px;font-size:14px;line-height:1;white-space:nowrap;letter-spacing:-0.3px;color:#111">Ecraser les calques</div>
<div style="position:absolute;left:873px;top:82px;width:13px;height:13px;background:#fff;border-radius:3px;box-shadow:0 0 0 0.5px #b8b8b8"></div>
<div class="t" style="position:absolute;left:892px;top:82px;font-size:14px;line-height:1;white-space:nowrap;letter-spacing:-0.3px;color:#111">Ecraser les blocs</div>
<div style="position:absolute;left:1004px;top:70px;width:1px;height:36px;background:#a4a4a4"></div>
<div style="position:absolute;left:1005px;top:70px;width:1px;height:36px;background:#fafafa"></div>
<svg style="position:absolute;left:1017px;top:75px;" width="28" height="28" viewBox="0 0 28 28"><path d="M3.1,3 L6.5,7.2 A10.1,10.1 0 1 1 15.2,22.9 L15.2,17.6 A4.8,4.8 0 1 0 10.5,10.8 L14,13.9 L3.1,13.9 Z" fill="#fdd9a0" stroke="#c8801c" stroke-width="1.1" stroke-linejoin="round"/></svg>
<svg style="position:absolute;left:1058px;top:70px;" width="1" height="36" viewBox="0 0 1 36"><rect x="0" y="0" width="1" height="1" fill="#6a6a6a"/><rect x="0" y="3" width="1" height="1" fill="#6a6a6a"/><rect x="0" y="6" width="1" height="1" fill="#6a6a6a"/><rect x="0" y="9" width="1" height="1" fill="#6a6a6a"/><rect x="0" y="12" width="1" height="1" fill="#6a6a6a"/><rect x="0" y="15" width="1" height="1" fill="#6a6a6a"/><rect x="0" y="18" width="1" height="1" fill="#6a6a6a"/><rect x="0" y="21" width="1" height="1" fill="#6a6a6a"/><rect x="0" y="24" width="1" height="1" fill="#6a6a6a"/><rect x="0" y="27" width="1" height="1" fill="#6a6a6a"/><rect x="0" y="30" width="1" height="1" fill="#6a6a6a"/><rect x="0" y="33" width="1" height="1" fill="#6a6a6a"/></svg>
<div style="position:absolute;left:0px;top:108px;width:72px;height:690px;background:linear-gradient(90deg,#e2e2e2 0%,#d8d8d8 50%,#cacaca 96%,#b4b4b4 97%,#b4b4b4 100%)"></div>
<div style="position:absolute;left:7px;top:116px;width:2px;height:2px;background:#a8a8a8"></div>
<div style="position:absolute;left:13px;top:116px;width:2px;height:2px;background:#a8a8a8"></div>
<div style="position:absolute;left:19px;top:116px;width:2px;height:2px;background:#a8a8a8"></div>
<div style="position:absolute;left:25px;top:116px;width:2px;height:2px;background:#a8a8a8"></div>
<div style="position:absolute;left:31px;top:116px;width:2px;height:2px;background:#a8a8a8"></div>
<div style="position:absolute;left:37px;top:116px;width:2px;height:2px;background:#a8a8a8"></div>
<div style="position:absolute;left:43px;top:116px;width:2px;height:2px;background:#a8a8a8"></div>
<div style="position:absolute;left:49px;top:116px;width:2px;height:2px;background:#a8a8a8"></div>
<div style="position:absolute;left:55px;top:116px;width:2px;height:2px;background:#a8a8a8"></div>
<div style="position:absolute;left:61px;top:116px;width:2px;height:2px;background:#a8a8a8"></div>
<div style="position:absolute;left:67px;top:116px;width:2px;height:2px;background:#a8a8a8"></div>
<div style="position:absolute;left:1px;top:120px;width:70px;height:26px;background:linear-gradient(#f2f2f2 0%,#e2e2e2 35%,#ececec 70%,#f4f4f4 100%);border:1px solid #8f8f8f;box-sizing:border-box;"></div>
<svg style="position:absolute;left:1px;top:120px;" width="70" height="26" viewBox="0 0 70 26"><path d="M28,12.5 L38,7 L38,18 Z" fill="#000"/></svg>
<div style="position:absolute;left:1px;top:156px;width:35px;height:35px;background:linear-gradient(#f2f2f2 0%,#e2e2e2 35%,#ececec 70%,#f4f4f4 100%);border:1px solid #8f8f8f;box-sizing:border-box;"></div>
<svg style="position:absolute;left:1px;top:156px;" width="35" height="35" viewBox="0 0 35 35"><path d="M16.5,12 L16.5,21 M12,16.5 L21,16.5" stroke="#000" stroke-width="1.2"/></svg>
<div style="position:absolute;left:36px;top:156px;width:35px;height:35px;background:linear-gradient(#f2f2f2 0%,#e2e2e2 35%,#ececec 70%,#f4f4f4 100%);border:1px solid #8f8f8f;box-sizing:border-box;"></div>
<svg style="position:absolute;left:36px;top:156px;" width="35" height="35" viewBox="0 0 35 35"><circle cx="6.4" cy="6.4" r="1.9" fill="#ff0000"/><circle cx="13.4" cy="6.4" r="1.9" fill="#ff0000"/><circle cx="20.4" cy="6.4" r="1.9" fill="#ff0000"/><circle cx="27.4" cy="6.4" r="1.9" fill="#ff0000"/><circle cx="6.4" cy="13.4" r="1.9" fill="#ff0000"/><circle cx="13.4" cy="13.4" r="1.9" fill="#ff0000"/><circle cx="20.4" cy="13.4" r="1.9" fill="#ff0000"/><circle cx="27.4" cy="13.4" r="1.9" fill="#ff0000"/><circle cx="6.4" cy="20.4" r="1.9" fill="#ff0000"/><circle cx="13.4" cy="20.4" r="1.9" fill="#ff0000"/><circle cx="20.4" cy="20.4" r="1.9" fill="#ff0000"/><circle cx="27.4" cy="20.4" r="1.9" fill="#ff0000"/><circle cx="6.4" cy="27.4" r="1.9" fill="#ff0000"/><circle cx="13.4" cy="27.4" r="1.9" fill="#ff0000"/><circle cx="20.4" cy="27.4" r="1.9" fill="#ff0000"/><circle cx="27.4" cy="27.4" r="1.9" fill="#ff0000"/></svg>
<div style="position:absolute;left:1px;top:199px;width:35px;height:35px;background:linear-gradient(#f2f2f2 0%,#e2e2e2 35%,#ececec 70%,#f4f4f4 100%);border:1px solid #8f8f8f;box-sizing:border-box;"></div>
<svg style="position:absolute;left:1px;top:199px;" width="35" height="35" viewBox="0 0 35 35"><path d="M6.3,16.3 L27.4,27.2 M14.8,6.4 Q15.5,17 27.4,19" stroke="#111" stroke-width="1.2" fill="none"/><circle cx="6.3" cy="16.3" r="1.8" fill="#ff0000"/><circle cx="27.4" cy="27.2" r="1.8" fill="#ff0000"/><circle cx="14.8" cy="6.4" r="1.8" fill="#ff0000"/><circle cx="27.4" cy="19" r="1.8" fill="#ff0000"/></svg>
<div style="position:absolute;left:36px;top:199px;width:35px;height:35px;background:linear-gradient(#f2f2f2 0%,#e2e2e2 35%,#ececec 70%,#f4f4f4 100%);border:1px solid #8f8f8f;box-sizing:border-box;"></div>
<svg style="position:absolute;left:36px;top:199px;" width="35" height="35" viewBox="0 0 35 35"><path d="M6.3,17.4 L27.7,6 M14.8,27.5 L16,22.5 Q18,17 27.3,14.8" stroke="#111" stroke-width="1.2" fill="none"/><circle cx="6.3" cy="17.4" r="1.8" fill="#ff0000"/><circle cx="11.7" cy="14.7" r="1.8" fill="#ff0000"/><circle cx="16.8" cy="12" r="1.8" fill="#ff0000"/><circle cx="22.3" cy="9.2" r="1.8" fill="#ff0000"/><circle cx="27.7" cy="6" r="1.8" fill="#ff0000"/><circle cx="14.8" cy="27.5" r="1.8" fill="#ff0000"/><circle cx="16" cy="22.5" r="1.8" fill="#ff0000"/><circle cx="18.5" cy="18.3" r="1.8" fill="#ff0000"/><circle cx="22.5" cy="15.8" r="1.8" fill="#ff0000"/><circle cx="27.3" cy="14.8" r="1.8" fill="#ff0000"/></svg>
<div style="position:absolute;left:1px;top:234px;width:35px;height:35px;background:linear-gradient(#f2f2f2 0%,#e2e2e2 35%,#ececec 70%,#f4f4f4 100%);border:1px solid #8f8f8f;box-sizing:border-box;"></div>
<svg style="position:absolute;left:1px;top:234px;" width="35" height="35" viewBox="0 0 35 35"><path d="M8.4,7 L18.4,18.5 M15,27 Q15.5,21 18.4,18.5 Q21,15.5 27,15" stroke="#111" stroke-width="1.2" fill="none"/><path d="M14,14 Q18,11 22,14" stroke="#333" stroke-width="0.7" fill="none" stroke-dasharray="1,1"/><circle cx="18.4" cy="18.5" r="1.8" fill="#ff0000"/></svg>
<div style="position:absolute;left:36px;top:234px;width:35px;height:35px;background:linear-gradient(#f2f2f2 0%,#e2e2e2 35%,#ececec 70%,#f4f4f4 100%);border:1px solid #8f8f8f;box-sizing:border-box;"></div>
<svg style="position:absolute;left:36px;top:234px;" width="35" height="35" viewBox="0 0 35 35"><circle cx="21" cy="14" r="6.5" stroke="#111" stroke-width="1.2" fill="none"/><path d="M7,25.5 L14.8,11.4" stroke="#111" stroke-width="1.2" fill="none"/><circle cx="14.8" cy="11.4" r="1.8" fill="#ff0000"/></svg>
<div style="position:absolute;left:1px;top:269px;width:35px;height:35px;background:linear-gradient(#f2f2f2 0%,#e2e2e2 35%,#ececec 70%,#f4f4f4 100%);border:1px solid #8f8f8f;box-sizing:border-box;"></div>
<svg style="position:absolute;left:1px;top:269px;" width="35" height="35" viewBox="0 0 35 35"><path d="M5.5,17.7 L27,6.3 M14.7,27.5 Q16,16 27,14" stroke="#111" stroke-width="1.2" fill="none"/><circle cx="16.5" cy="12" r="1.8" fill="#ff0000"/><circle cx="27" cy="27" r="1.8" fill="#ff0000"/></svg>
<div style="position:absolute;left:36px;top:269px;width:35px;height:35px;background:linear-gradient(#f2f2f2 0%,#e2e2e2 35%,#ececec 70%,#f4f4f4 100%);border:1px solid #8f8f8f;box-sizing:border-box;"></div>
<svg style="position:absolute;left:36px;top:269px;" width="35" height="35" viewBox="0 0 35 35"><circle cx="17" cy="17" r="10.2" stroke="#111" stroke-width="1.2" fill="none"/><circle cx="17" cy="17" r="1.8" fill="#ff0000"/><circle cx="17" cy="6.8" r="1.8" fill="#ff0000"/><circle cx="17" cy="27.2" r="1.8" fill="#ff0000"/><circle cx="6.8" cy="17" r="1.8" fill="#ff0000"/><circle cx="27.2" cy="17" r="1.8" fill="#ff0000"/></svg>
<div style="position:absolute;left:1px;top:312px;width:35px;height:35px;background:linear-gradient(#f2f2f2 0%,#e2e2e2 35%,#ececec 70%,#f4f4f4 100%);border:1px solid #8f8f8f;box-sizing:border-box;"></div>
<svg style="position:absolute;left:1px;top:312px;" width="35" height="35" viewBox="0 0 35 35"><path d="M6,18 L27.8,6 M14.5,27.5 Q15,19 18.3,18.5 Q21,16 27.8,15" stroke="#111" stroke-width="1.2" fill="none"/><circle cx="17" cy="12" r="1.8" fill="#ff0000"/><circle cx="18.3" cy="18.5" r="1.8" fill="#ff0000"/></svg>
<div style="position:absolute;left:36px;top:312px;width:35px;height:35px;background:#f0c8c8;border:1px solid #d06060;box-sizing:border-box"></div>
<svg style="position:absolute;left:36px;top:312px;" width="35" height="35" viewBox="0 0 35 35"><rect x="5.4" y="7.4" width="23.5" height="19.2" fill="none" stroke="#3a2828" stroke-width="1.4"/><path d="M7,25 L27.5,9" stroke="#8a6a6a" stroke-width="0.7" stroke-dasharray="2,1.5"/><circle cx="17" cy="17" r="1.8" fill="#ff0000"/></svg>
<div style="position:absolute;left:1px;top:355px;width:35px;height:35px;background:linear-gradient(#f2f2f2 0%,#e2e2e2 35%,#ececec 70%,#f4f4f4 100%);border:1px solid #8f8f8f;box-sizing:border-box;"></div>
<svg style="position:absolute;left:1px;top:355px;" width="35" height="35" viewBox="0 0 35 35"><path d="M8,17.7 L28,6.3 M16,26.5 Q16.5,21 18.5,18.5 Q21,15.5 28,14.5" stroke="#111" stroke-width="1.2" fill="none"/><line x1="5" y1="13.8" x2="9.29" y2="11.63" stroke="#111" stroke-width="1.3"/><path d="M12.5,10 L10.37,13.77 L8.20,9.49 Z" fill="#111"/><line x1="19.5" y1="26.5" x2="20.36" y2="23.92" stroke="#111" stroke-width="1.3"/><path d="M21.5,20.5 L22.64,24.67 L18.08,23.16 Z" fill="#111"/><circle cx="14.3" cy="13.8" r="1.8" fill="#ff0000"/><circle cx="18" cy="19" r="1.8" fill="#ff0000"/></svg>
<div style="position:absolute;left:36px;top:355px;width:35px;height:35px;background:linear-gradient(#f2f2f2 0%,#e2e2e2 35%,#ececec 70%,#f4f4f4 100%);border:1px solid #8f8f8f;box-sizing:border-box;"></div>
<svg style="position:absolute;left:36px;top:355px;" width="35" height="35" viewBox="0 0 35 35"><text x="4.6" y="29.5" font-family="Liberation Sans" font-size="10.5" fill="#111">1</text><circle cx="6.3" cy="18.5" r="1.4" fill="#111"/><line x1="5" y1="15.5" x2="8.95" y2="13.07" stroke="#111" stroke-width="1.2"/><path d="M11.5,11.5 L9.99,14.78 L7.90,11.37 Z" fill="#111"/></svg>
<div style="position:absolute;left:1px;top:398px;width:35px;height:35px;background:linear-gradient(#f2f2f2 0%,#e2e2e2 35%,#ececec 70%,#f4f4f4 100%);border:1px solid #8f8f8f;box-sizing:border-box;"></div>
<svg style="position:absolute;left:1px;top:398px;" width="35" height="35" viewBox="0 0 35 35"><path d="M5,13.3 L28,21.5 M20.3,5 L15,28" stroke="#111" stroke-width="1.2" fill="none"/><circle cx="16.5" cy="17.5" r="1.8" fill="#ff0000"/></svg>
<div style="position:absolute;left:36px;top:398px;width:35px;height:35px;background:linear-gradient(#f2f2f2 0%,#e2e2e2 35%,#ececec 70%,#f4f4f4 100%);border:1px solid #8f8f8f;box-sizing:border-box;"></div>
<svg style="position:absolute;left:36px;top:398px;" width="35" height="35" viewBox="0 0 35 35"><path d="M6.5,14.5 L16,18.5 M25.5,7 L23,17" stroke="#111" stroke-width="1.2" fill="none"/><circle cx="21.5" cy="23.5" r="1.8" fill="#ff0000"/></svg>
<div style="position:absolute;left:1px;top:441px;width:35px;height:35px;background:linear-gradient(#cacaca,#b4b4b4);border:1px solid #9a9a9a;border-radius:6px;box-sizing:border-box"></div>
<svg style="position:absolute;left:1px;top:441px;" width="35" height="35" viewBox="0 0 35 35"><text x="17.5" y="21.5" text-anchor="middle" font-family="Liberation Sans" font-size="10.5" fill="#222">Auto</text></svg>
<div style="position:absolute;left:1px;top:484px;width:35px;height:35px;background:linear-gradient(#f2f2f2 0%,#e2e2e2 35%,#ececec 70%,#f4f4f4 100%);border:1px solid #8f8f8f;box-sizing:border-box;"></div>
<svg style="position:absolute;left:1px;top:484px;" width="35" height="35" viewBox="0 0 35 35"><path d="M12.5,7 L12.5,21.5 L29,21.5" stroke="#555" stroke-width="1.2" fill="none"/><text x="5" y="15" font-family="Liberation Sans" font-size="10" fill="#111">y</text><text x="24" y="32" font-family="Liberation Sans" font-size="10" fill="#111">x</text><circle cx="27" cy="7.5" r="1.7" fill="#ff0000"/></svg>
<div style="position:absolute;left:36px;top:484px;width:35px;height:35px;background:linear-gradient(#f2f2f2 0%,#e2e2e2 35%,#ececec 70%,#f4f4f4 100%);border:1px solid #8f8f8f;box-sizing:border-box;"></div>
<svg style="position:absolute;left:36px;top:484px;" width="35" height="35" viewBox="0 0 35 35"><path d="M4.5,22.5 L21,6 Q28.5,13 28,22.5 Z" stroke="#222" stroke-width="1.2" fill="none"/><text x="8" y="16" font-family="Liberation Sans" font-size="10" fill="#111">r</text><text x="17.5" y="21" font-family="Liberation Sans" font-size="10" fill="#111">a</text><circle cx="21" cy="6" r="1.8" fill="#ff0000"/></svg>
<div style="position:absolute;left:1px;top:527px;width:35px;height:35px;background:linear-gradient(#f2f2f2 0%,#e2e2e2 35%,#ececec 70%,#f4f4f4 100%);border:1px solid #8f8f8f;box-sizing:border-box;"></div>
<svg style="position:absolute;left:1px;top:527px;" width="35" height="35" viewBox="0 0 35 35"><path d="M9,9 L25.5,9 M9,9 L9,25.5" stroke="#aaa" stroke-width="0.8"/><text x="12.5" y="30" font-family="Liberation Sans" font-size="10" fill="#111">1</text><text x="22" y="22.5" font-family="Liberation Sans" font-size="10" fill="#111">2</text><circle cx="9" cy="9" r="2.3" fill="#ff0000"/><circle cx="25.5" cy="9" r="1.2" fill="#111"/><circle cx="9" cy="26" r="1.2" fill="#111"/></svg>
<div style="position:absolute;left:36px;top:527px;width:35px;height:35px;background:linear-gradient(#f2f2f2 0%,#e2e2e2 35%,#ececec 70%,#f4f4f4 100%);border:1px solid #8f8f8f;box-sizing:border-box;"></div>
<svg style="position:absolute;left:36px;top:527px;" width="35" height="35" viewBox="0 0 35 35"><path d="M9,25.5 L25.5,25.5 M25.5,9 L25.5,25.5" stroke="#aaa" stroke-width="0.8"/><text x="6" y="22.5" font-family="Liberation Sans" font-size="10" fill="#111">1</text><text x="16" y="15" font-family="Liberation Sans" font-size="10" fill="#111">2</text><circle cx="25.5" cy="25.5" r="2.3" fill="#ff0000"/><circle cx="25.5" cy="9" r="1.2" fill="#111"/><circle cx="9" cy="25.5" r="1.2" fill="#111"/></svg>
<div style="position:absolute;left:1px;top:570px;width:35px;height:35px;background:linear-gradient(#f2f2f2 0%,#e2e2e2 35%,#ececec 70%,#f4f4f4 100%);border:1px solid #8f8f8f;box-sizing:border-box;"></div>
<svg style="position:absolute;left:1px;top:570px;" width="35" height="35" viewBox="0 0 35 35"><path d="M6,10 L6,22 L12,27 L24,27 L24,8 L9,8 Z" fill="none" stroke="#f0b0b0" stroke-width="0.9"/><circle cx="13" cy="15" r="4" fill="none" stroke="#f0b0b0" stroke-width="0.9"/><path d="M14,20 L21.5,14 L21.5,22 Z" fill="none" stroke="#f0b0b0" stroke-width="0.9"/><circle cx="17.5" cy="18.5" r="1.7" fill="#ff0000"/></svg>
<div style="position:absolute;left:1px;top:613px;width:35px;height:35px;background:linear-gradient(#cacaca,#b4b4b4);border:1px solid #9a9a9a;border-radius:6px;box-sizing:border-box"></div>
<svg style="position:absolute;left:1px;top:613px;" width="35" height="35" viewBox="0 0 35 35"><path d="M14.3,17.5 L20.3,17.5 M17.3,14.5 L17.3,20.5" stroke="#444" stroke-width="1"/></svg>
<div style="position:absolute;left:36px;top:613px;width:35px;height:35px;background:linear-gradient(#f2f2f2 0%,#e2e2e2 35%,#ececec 70%,#f4f4f4 100%);border:1px solid #8f8f8f;box-sizing:border-box;"></div>
<svg style="position:absolute;left:36px;top:613px;" width="35" height="35" viewBox="0 0 35 35"><line x1="5.5" y1="17.5" x2="29.5" y2="17.5" stroke="#111" stroke-width="1"/><line x1="17.5" y1="5.5" x2="17.5" y2="29.5" stroke="#111" stroke-width="1"/><circle cx="17.5" cy="17.5" r="3.6" fill="none" stroke="#ff0000" stroke-width="1.1"/><path d="M13.9,17.5 L21.1,17.5 M17.5,13.9 L17.5,21.1" stroke="#ff0000" stroke-width="1"/></svg>
<div style="position:absolute;left:1px;top:648px;width:35px;height:35px;background:linear-gradient(#f2f2f2 0%,#e2e2e2 35%,#ececec 70%,#f4f4f4 100%);border:1px solid #8f8f8f;box-sizing:border-box;"></div>
<svg style="position:absolute;left:1px;top:648px;" width="35" height="35" viewBox="0 0 35 35"><line x1="5.5" y1="17.5" x2="29.5" y2="17.5" stroke="#111" stroke-width="1"/><circle cx="17.5" cy="17.5" r="3.6" fill="none" stroke="#ff0000" stroke-width="1.1"/><path d="M13.9,17.5 L21.1,17.5 M17.5,13.9 L17.5,21.1" stroke="#ff0000" stroke-width="1"/></svg>
<div style="position:absolute;left:36px;top:648px;width:35px;height:35px;background:linear-gradient(#f2f2f2 0%,#e2e2e2 35%,#ececec 70%,#f4f4f4 100%);border:1px solid #8f8f8f;box-sizing:border-box;"></div>
<svg style="position:absolute;left:36px;top:648px;" width="35" height="35" viewBox="0 0 35 35"><line x1="17.5" y1="5.5" x2="17.5" y2="29.5" stroke="#111" stroke-width="1"/><circle cx="17.5" cy="17.5" r="3.6" fill="none" stroke="#ff0000" stroke-width="1.1"/><path d="M13.9,17.5 L21.1,17.5 M17.5,13.9 L17.5,21.1" stroke="#ff0000" stroke-width="1"/></svg>
<div style="position:absolute;left:1px;top:683px;width:35px;height:35px;background:linear-gradient(#f2f2f2 0%,#e2e2e2 35%,#ececec 70%,#f4f4f4 100%);border:1px solid #8f8f8f;box-sizing:border-box;"></div>
<svg style="position:absolute;left:1px;top:683px;" width="35" height="35" viewBox="0 0 35 35"><path d="M9.5,9.5 L9.9,5.5 M13.2,10.3 L14.5,6.5 M16.7,12.0 L18.8,8.6 M19.7,14.4 L22.5,11.6 M23.6,19.0 L26.7,17.5 M25.1,24.9 L29.1,24.5 " stroke="#666" stroke-width="1"/><path d="M7.7,26.4 L26.3,15" stroke="#111" stroke-width="1.2"/><circle cx="7.7" cy="26.4" r="3.6" fill="none" stroke="#ff0000" stroke-width="1.1"/><path d="M4.1,26.4 L11.3,26.4 M7.7,22.8 L7.7,30" stroke="#ff0000" stroke-width="1"/></svg>
<div style="position:absolute;left:1px;top:727px;width:35px;height:34px;background:linear-gradient(#f2f2f2 0%,#e2e2e2 35%,#ececec 70%,#f4f4f4 100%);border:1px solid #8f8f8f;box-sizing:border-box;"></div>
<svg style="position:absolute;left:1px;top:727px;" width="35" height="34" viewBox="0 0 35 34"><circle cx="14" cy="10" r="3.5" fill="none" stroke="#ff0000" stroke-width="1"/><path d="M10.5,10 L17.5,10 M14,6.5 L14,13.5" stroke="#ff0000" stroke-width="1"/><path d="M15.5,12.5 L15.5,24 L18,21.8 L20.5,27 L22.3,26.2 L20,21 L23.3,20.7 Z" fill="#fff" stroke="#444" stroke-width="0.9"/></svg>
<div style="position:absolute;left:36px;top:727px;width:35px;height:34px;background:linear-gradient(#f2f2f2 0%,#e2e2e2 35%,#ececec 70%,#f4f4f4 100%);border:1px solid #8f8f8f;box-sizing:border-box;"></div>
<svg style="position:absolute;left:36px;top:727px;" width="35" height="34" viewBox="0 0 35 34"><ellipse cx="9.5" cy="11.7" rx="2.4" ry="3.6" fill="none" stroke="#000" stroke-width="1.9"/><path d="M11.9,11.7 L25.5,11.7" stroke="#000" stroke-width="2.6"/><path d="M22.0,11.7 L22.0,15.5 M24.5,11.7 L24.5,15.5" stroke="#000" stroke-width="2"/><circle cx="16.4" cy="23.6" r="3.6" fill="none" stroke="#ff0000" stroke-width="1.1"/><path d="M12.8,23.6 L20,23.6 M16.4,20 L16.4,27.2" stroke="#ff0000" stroke-width="1"/></svg>
<div style="position:absolute;left:1px;top:770px;width:35px;height:34px;background:linear-gradient(#f2f2f2 0%,#e2e2e2 35%,#ececec 70%,#f4f4f4 100%);border:1px solid #8f8f8f;box-sizing:border-box;"></div>
<svg style="position:absolute;left:1px;top:770px;" width="35" height="34" viewBox="0 0 35 34"><ellipse cx="9.5" cy="15.6" rx="2.4" ry="3.6" fill="none" stroke="#000" stroke-width="1.9"/><path d="M11.9,15.6 L25.5,15.6" stroke="#000" stroke-width="2.6"/><path d="M22.0,15.6 L22.0,19.4 M24.5,15.6 L24.5,19.4" stroke="#000" stroke-width="2"/></svg>
<div style="position:absolute;left:72px;top:108px;width:1083px;height:24px;background:#d5d5d5"></div>
<div class="t" style="position:absolute;left:578px;top:114px;font-size:12.5px;line-height:1;white-space:nowrap;color:#222">* middle_manual.dxf</div>
<div style="position:absolute;left:72px;top:132px;width:1083px;height:23px;background:#ececec"></div>
<div style="position:absolute;left:72px;top:155px;width:23px;height:577px;background:#ececec"></div>
<div style="position:absolute;left:95px;top:155px;width:1043px;height:577px;background:#000"></div>
<div style="position:absolute;left:1138px;top:155px;width:16px;height:577px;background:#f7f7f7"></div>
<div style="position:absolute;left:1154px;top:108px;width:1px;height:690px;background:#bdbdbd"></div>
<div style="position:absolute;left:72px;top:732px;width:1082px;height:16px;background:#f7f7f7"></div>
<div style="position:absolute;left:72px;top:732px;width:23px;height:16px;background:#ececec"></div>
<div style="position:absolute;left:1083px;top:732px;width:71px;height:16px;background:#ececec"></div>
<div class="t" style="position:absolute;left:1103px;top:735px;font-size:12.5px;line-height:1;white-space:nowrap;color:#111">10 &lt; 100</div>
<div style="position:absolute;left:221px;top:737px;width:736px;height:8px;background:#808080;border-radius:4px"></div>
<div style="position:absolute;left:1143px;top:332px;width:8px;height:330px;background:#808080;border-radius:4px"></div>
<svg style="position:absolute;left:72px;top:132px;" width="1066" height="23" viewBox="0 0 1066 23"><text x="47.3" y="9" text-anchor="middle" font-family="Liberation Sans" font-size="9" fill="#1a1a1a">80</text><line x1="114.5" y1="16" x2="114.5" y2="23" stroke="#555" stroke-width="1"/><text x="114.4" y="9" text-anchor="middle" font-family="Liberation Sans" font-size="9" fill="#1a1a1a">90</text><line x1="181.5" y1="16" x2="181.5" y2="23" stroke="#555" stroke-width="1"/><text x="181.6" y="9" text-anchor="middle" font-family="Liberation Sans" font-size="9" fill="#1a1a1a">100</text><line x1="248.5" y1="16" x2="248.5" y2="23" stroke="#555" stroke-width="1"/><text x="248.7" y="9" text-anchor="middle" font-family="Liberation Sans" font-size="9" fill="#1a1a1a">110</text><line x1="315.5" y1="16" x2="315.5" y2="23" stroke="#555" stroke-width="1"/><text x="315.9" y="9" text-anchor="middle" font-family="Liberation Sans" font-size="9" fill="#1a1a1a">120</text><line x1="383.5" y1="16" x2="383.5" y2="23" stroke="#555" stroke-width="1"/><text x="383.0" y="9" text-anchor="middle" font-family="Liberation Sans" font-size="9" fill="#1a1a1a">130</text><line x1="450.5" y1="16" x2="450.5" y2="23" stroke="#555" stroke-width="1"/><text x="450.1" y="9" text-anchor="middle" font-family="Liberation Sans" font-size="9" fill="#1a1a1a">140</text><line x1="517.5" y1="16" x2="517.5" y2="23" stroke="#555" stroke-width="1"/><text x="517.3" y="9" text-anchor="middle" font-family="Liberation Sans" font-size="9" fill="#1a1a1a">150</text><line x1="584.5" y1="16" x2="584.5" y2="23" stroke="#555" stroke-width="1"/><text x="584.4" y="9" text-anchor="middle" font-family="Liberation Sans" font-size="9" fill="#1a1a1a">160</text><line x1="651.5" y1="16" x2="651.5" y2="23" stroke="#555" stroke-width="1"/><text x="651.6" y="9" text-anchor="middle" font-family="Liberation Sans" font-size="9" fill="#1a1a1a">170</text><line x1="718.5" y1="16" x2="718.5" y2="23" stroke="#555" stroke-width="1"/><text x="718.7" y="9" text-anchor="middle" font-family="Liberation Sans" font-size="9" fill="#1a1a1a">180</text><line x1="785.5" y1="16" x2="785.5" y2="23" stroke="#555" stroke-width="1"/><text x="785.8" y="9" text-anchor="middle" font-family="Liberation Sans" font-size="9" fill="#1a1a1a">190</text><line x1="852.5" y1="16" x2="852.5" y2="23" stroke="#555" stroke-width="1"/><text x="853.0" y="9" text-anchor="middle" font-family="Liberation Sans" font-size="9" fill="#1a1a1a">200</text><line x1="920.5" y1="16" x2="920.5" y2="23" stroke="#555" stroke-width="1"/><text x="920.1" y="9" text-anchor="middle" font-family="Liberation Sans" font-size="9" fill="#1a1a1a">210</text><line x1="987.5" y1="16" x2="987.5" y2="23" stroke="#555" stroke-width="1"/><text x="987.3" y="9" text-anchor="middle" font-family="Liberation Sans" font-size="9" fill="#1a1a1a">220</text><line x1="1054.5" y1="16" x2="1054.5" y2="23" stroke="#555" stroke-width="1"/><text x="1054.4" y="9" text-anchor="middle" font-family="Liberation Sans" font-size="9" fill="#1a1a1a">230</text><path d="M41.8,13.5 L52.8,13.5 L47.3,19 Z" fill="#000"/></svg>
<svg style="position:absolute;left:72px;top:155px;" width="23" height="577" viewBox="0 0 23 577"><line x1="16" y1="557.5" x2="23" y2="557.5" stroke="#555" stroke-width="1"/><text transform="translate(6,557.5) rotate(-90)" x="0" y="3.2" text-anchor="middle" font-family="Liberation Sans" font-size="9" fill="#1a1a1a">10</text><line x1="16" y1="490.5" x2="23" y2="490.5" stroke="#555" stroke-width="1"/><text transform="translate(6,490.4) rotate(-90)" x="0" y="3.2" text-anchor="middle" font-family="Liberation Sans" font-size="9" fill="#1a1a1a">20</text><line x1="16" y1="423.5" x2="23" y2="423.5" stroke="#555" stroke-width="1"/><text transform="translate(6,423.2) rotate(-90)" x="0" y="3.2" text-anchor="middle" font-family="Liberation Sans" font-size="9" fill="#1a1a1a">30</text><line x1="16" y1="356.5" x2="23" y2="356.5" stroke="#555" stroke-width="1"/><text transform="translate(6,356.1) rotate(-90)" x="0" y="3.2" text-anchor="middle" font-family="Liberation Sans" font-size="9" fill="#1a1a1a">40</text><line x1="16" y1="288.5" x2="23" y2="288.5" stroke="#555" stroke-width="1"/><text transform="translate(6,289.0) rotate(-90)" x="0" y="3.2" text-anchor="middle" font-family="Liberation Sans" font-size="9" fill="#1a1a1a">50</text><line x1="16" y1="221.5" x2="23" y2="221.5" stroke="#555" stroke-width="1"/><text transform="translate(6,221.8) rotate(-90)" x="0" y="3.2" text-anchor="middle" font-family="Liberation Sans" font-size="9" fill="#1a1a1a">60</text><line x1="16" y1="154.5" x2="23" y2="154.5" stroke="#555" stroke-width="1"/><text transform="translate(6,154.7) rotate(-90)" x="0" y="3.2" text-anchor="middle" font-family="Liberation Sans" font-size="9" fill="#1a1a1a">70</text><line x1="16" y1="87.5" x2="23" y2="87.5" stroke="#555" stroke-width="1"/><text transform="translate(6,87.5) rotate(-90)" x="0" y="3.2" text-anchor="middle" font-family="Liberation Sans" font-size="9" fill="#1a1a1a">80</text><line x1="16" y1="20.5" x2="23" y2="20.5" stroke="#555" stroke-width="1"/><text transform="translate(6,20.4) rotate(-90)" x="0" y="3.2" text-anchor="middle" font-family="Liberation Sans" font-size="9" fill="#1a1a1a">90</text><path d="M13.5,149.2 L13.5,160.2 L19,154.7 Z" fill="#333"/></svg>
<svg style="position:absolute;left:95px;top:155px;overflow:hidden" width="1043" height="577" viewBox="0 0 1043 577"><rect x="92" y="557" width="1" height="1" fill="#4a4a4a"/><rect x="92" y="490" width="1" height="1" fill="#4a4a4a"/><rect x="92" y="423" width="1" height="1" fill="#4a4a4a"/><rect x="92" y="356" width="1" height="1" fill="#4a4a4a"/><rect x="92" y="288" width="1" height="1" fill="#4a4a4a"/><rect x="92" y="221" width="1" height="1" fill="#4a4a4a"/><rect x="92" y="154" width="1" height="1" fill="#4a4a4a"/><rect x="92" y="87" width="1" height="1" fill="#4a4a4a"/><rect x="92" y="20" width="1" height="1" fill="#4a4a4a"/><rect x="159" y="557" width="1" height="1" fill="#4a4a4a"/><rect x="159" y="490" width="1" height="1" fill="#4a4a4a"/><rect x="159" y="423" width="1" height="1" fill="#4a4a4a"/><rect x="159" y="356" width="1" height="1" fill="#4a4a4a"/><rect x="159" y="288" width="1" height="1" fill="#4a4a4a"/><rect x="159" y="221" width="1" height="1" fill="#4a4a4a"/><rect x="159" y="154" width="1" height="1" fill="#4a4a4a"/><rect x="159" y="87" width="1" height="1" fill="#4a4a4a"/><rect x="159" y="20" width="1" height="1" fill="#4a4a4a"/><rect x="226" y="557" width="1" height="1" fill="#4a4a4a"/><rect x="226" y="490" width="1" height="1" fill="#4a4a4a"/><rect x="226" y="423" width="1" height="1" fill="#4a4a4a"/><rect x="226" y="356" width="1" height="1" fill="#4a4a4a"/><rect x="226" y="288" width="1" height="1" fill="#4a4a4a"/><rect x="226" y="221" width="1" height="1" fill="#4a4a4a"/><rect x="226" y="154" width="1" height="1" fill="#4a4a4a"/><rect x="226" y="87" width="1" height="1" fill="#4a4a4a"/><rect x="226" y="20" width="1" height="1" fill="#4a4a4a"/><rect x="293" y="557" width="1" height="1" fill="#4a4a4a"/><rect x="293" y="490" width="1" height="1" fill="#4a4a4a"/><rect x="293" y="423" width="1" height="1" fill="#4a4a4a"/><rect x="293" y="356" width="1" height="1" fill="#4a4a4a"/><rect x="293" y="288" width="1" height="1" fill="#4a4a4a"/><rect x="293" y="221" width="1" height="1" fill="#4a4a4a"/><rect x="293" y="154" width="1" height="1" fill="#4a4a4a"/><rect x="293" y="87" width="1" height="1" fill="#4a4a4a"/><rect x="293" y="20" width="1" height="1" fill="#4a4a4a"/><rect x="361" y="557" width="1" height="1" fill="#4a4a4a"/><rect x="361" y="490" width="1" height="1" fill="#4a4a4a"/><rect x="361" y="423" width="1" height="1" fill="#4a4a4a"/><rect x="361" y="356" width="1" height="1" fill="#4a4a4a"/><rect x="361" y="288" width="1" height="1" fill="#4a4a4a"/><rect x="361" y="221" width="1" height="1" fill="#4a4a4a"/><rect x="361" y="154" width="1" height="1" fill="#4a4a4a"/><rect x="361" y="87" width="1" height="1" fill="#4a4a4a"/><rect x="361" y="20" width="1" height="1" fill="#4a4a4a"/><rect x="428" y="557" width="1" height="1" fill="#4a4a4a"/><rect x="428" y="490" width="1" height="1" fill="#4a4a4a"/><rect x="428" y="423" width="1" height="1" fill="#4a4a4a"/><rect x="428" y="356" width="1" height="1" fill="#4a4a4a"/><rect x="428" y="288" width="1" height="1" fill="#4a4a4a"/><rect x="428" y="221" width="1" height="1" fill="#4a4a4a"/><rect x="428" y="154" width="1" height="1" fill="#4a4a4a"/><rect x="428" y="87" width="1" height="1" fill="#4a4a4a"/><rect x="428" y="20" width="1" height="1" fill="#4a4a4a"/><rect x="495" y="557" width="1" height="1" fill="#4a4a4a"/><rect x="495" y="490" width="1" height="1" fill="#4a4a4a"/><rect x="495" y="423" width="1" height="1" fill="#4a4a4a"/><rect x="495" y="356" width="1" height="1" fill="#4a4a4a"/><rect x="495" y="288" width="1" height="1" fill="#4a4a4a"/><rect x="495" y="221" width="1" height="1" fill="#4a4a4a"/><rect x="495" y="154" width="1" height="1" fill="#4a4a4a"/><rect x="495" y="87" width="1" height="1" fill="#4a4a4a"/><rect x="495" y="20" width="1" height="1" fill="#4a4a4a"/><rect x="562" y="557" width="1" height="1" fill="#4a4a4a"/><rect x="562" y="490" width="1" height="1" fill="#4a4a4a"/><rect x="562" y="423" width="1" height="1" fill="#4a4a4a"/><rect x="562" y="356" width="1" height="1" fill="#4a4a4a"/><rect x="562" y="288" width="1" height="1" fill="#4a4a4a"/><rect x="562" y="221" width="1" height="1" fill="#4a4a4a"/><rect x="562" y="154" width="1" height="1" fill="#4a4a4a"/><rect x="562" y="87" width="1" height="1" fill="#4a4a4a"/><rect x="562" y="20" width="1" height="1" fill="#4a4a4a"/><rect x="629" y="557" width="1" height="1" fill="#4a4a4a"/><rect x="629" y="490" width="1" height="1" fill="#4a4a4a"/><rect x="629" y="423" width="1" height="1" fill="#4a4a4a"/><rect x="629" y="356" width="1" height="1" fill="#4a4a4a"/><rect x="629" y="288" width="1" height="1" fill="#4a4a4a"/><rect x="629" y="221" width="1" height="1" fill="#4a4a4a"/><rect x="629" y="154" width="1" height="1" fill="#4a4a4a"/><rect x="629" y="87" width="1" height="1" fill="#4a4a4a"/><rect x="629" y="20" width="1" height="1" fill="#4a4a4a"/><rect x="696" y="557" width="1" height="1" fill="#4a4a4a"/><rect x="696" y="490" width="1" height="1" fill="#4a4a4a"/><rect x="696" y="423" width="1" height="1" fill="#4a4a4a"/><rect x="696" y="356" width="1" height="1" fill="#4a4a4a"/><rect x="696" y="288" width="1" height="1" fill="#4a4a4a"/><rect x="696" y="221" width="1" height="1" fill="#4a4a4a"/><rect x="696" y="154" width="1" height="1" fill="#4a4a4a"/><rect x="696" y="87" width="1" height="1" fill="#4a4a4a"/><rect x="696" y="20" width="1" height="1" fill="#4a4a4a"/><rect x="763" y="557" width="1" height="1" fill="#4a4a4a"/><rect x="763" y="490" width="1" height="1" fill="#4a4a4a"/><rect x="763" y="423" width="1" height="1" fill="#4a4a4a"/><rect x="763" y="356" width="1" height="1" fill="#4a4a4a"/><rect x="763" y="288" width="1" height="1" fill="#4a4a4a"/><rect x="763" y="221" width="1" height="1" fill="#4a4a4a"/><rect x="763" y="154" width="1" height="1" fill="#4a4a4a"/><rect x="763" y="87" width="1" height="1" fill="#4a4a4a"/><rect x="763" y="20" width="1" height="1" fill="#4a4a4a"/><rect x="830" y="557" width="1" height="1" fill="#4a4a4a"/><rect x="830" y="490" width="1" height="1" fill="#4a4a4a"/><rect x="830" y="423" width="1" height="1" fill="#4a4a4a"/><rect x="830" y="356" width="1" height="1" fill="#4a4a4a"/><rect x="830" y="288" width="1" height="1" fill="#4a4a4a"/><rect x="830" y="221" width="1" height="1" fill="#4a4a4a"/><rect x="830" y="154" width="1" height="1" fill="#4a4a4a"/><rect x="830" y="87" width="1" height="1" fill="#4a4a4a"/><rect x="830" y="20" width="1" height="1" fill="#4a4a4a"/><rect x="898" y="557" width="1" height="1" fill="#4a4a4a"/><rect x="898" y="490" width="1" height="1" fill="#4a4a4a"/><rect x="898" y="423" width="1" height="1" fill="#4a4a4a"/><rect x="898" y="356" width="1" height="1" fill="#4a4a4a"/><rect x="898" y="288" width="1" height="1" fill="#4a4a4a"/><rect x="898" y="221" width="1" height="1" fill="#4a4a4a"/><rect x="898" y="154" width="1" height="1" fill="#4a4a4a"/><rect x="898" y="87" width="1" height="1" fill="#4a4a4a"/><rect x="898" y="20" width="1" height="1" fill="#4a4a4a"/><rect x="965" y="557" width="1" height="1" fill="#4a4a4a"/><rect x="965" y="490" width="1" height="1" fill="#4a4a4a"/><rect x="965" y="423" width="1" height="1" fill="#4a4a4a"/><rect x="965" y="356" width="1" height="1" fill="#4a4a4a"/><rect x="965" y="288" width="1" height="1" fill="#4a4a4a"/><rect x="965" y="221" width="1" height="1" fill="#4a4a4a"/><rect x="965" y="154" width="1" height="1" fill="#4a4a4a"/><rect x="965" y="87" width="1" height="1" fill="#4a4a4a"/><rect x="965" y="20" width="1" height="1" fill="#4a4a4a"/><rect x="1032" y="557" width="1" height="1" fill="#4a4a4a"/><rect x="1032" y="490" width="1" height="1" fill="#4a4a4a"/><rect x="1032" y="423" width="1" height="1" fill="#4a4a4a"/><rect x="1032" y="356" width="1" height="1" fill="#4a4a4a"/><rect x="1032" y="288" width="1" height="1" fill="#4a4a4a"/><rect x="1032" y="221" width="1" height="1" fill="#4a4a4a"/><rect x="1032" y="154" width="1" height="1" fill="#4a4a4a"/><rect x="1032" y="87" width="1" height="1" fill="#4a4a4a"/><rect x="1032" y="20" width="1" height="1" fill="#4a4a4a"/><line x1="159.5" y1="0" x2="159.5" y2="577" stroke="#262626" stroke-width="1"/><line x1="830.5" y1="0" x2="830.5" y2="577" stroke="#262626" stroke-width="1"/><rect x="226" y="101" width="590.4" height="187.3" rx="13.4" fill="none" stroke="#fff" stroke-width="2"/><path d="M-15.0,117.5 L13.8,117.5 M-15.0,191.8 L13.8,191.8" stroke="#fff" stroke-width="6.7" stroke-linecap="round" stroke-linejoin="round" fill="none"/><path d="M30.8,188.8 L51.8,121.5 Q57.4,114.3 63.0,121.5 L84.3,189.1 M37.1,168.0 L77.7,168.0" stroke="#fff" stroke-width="6.7" stroke-linecap="round" stroke-linejoin="round" fill="none"/><path d="M106.6,117.5 L130.2,117.5 A24.3,18.5 0 0 1 154.5,136.0 L154.5,172.8 A24.3,18.5 0 0 1 130.2,191.3 L106.6,191.3 Z" stroke="#fff" stroke-width="6.7" stroke-linecap="round" stroke-linejoin="round" fill="none"/><rect x="-10" y="114.5" width="168.3" height="92.89999999999998" fill="none" stroke="#6c88c8" stroke-width="1.2" stroke-dasharray="10.5,4,3,4.5"/><line x1="0" y1="154.5" x2="1043" y2="154.5" stroke="#8c6a00" stroke-width="1" fill="none" stroke-dasharray="4.5,1.5"/><line x1="24.5" y1="0" x2="24.5" y2="577" stroke="#8c6a00" stroke-width="1" fill="none" stroke-dasharray="4.5,1.5"/><circle cx="24.5" cy="154.5" r="5.4" stroke="#8c6a00" stroke-width="1" fill="none"/><text x="32.8" y="172.7" font-family="Liberation Sans" font-size="13.4" fill="#fcc820" stroke="#fcc820" stroke-width="0.35">Grille</text><circle cx="360.5" cy="423" r="5.3" fill="none" stroke="#c00000" stroke-width="1"/><path d="M355.2,423 h10.6 M360.5,417.7 v10.6" stroke="#c00000" stroke-width="1"/></svg>
<div style="position:absolute;left:72px;top:747px;width:1082px;height:2px;background:#c4c4c4"></div>
<div style="position:absolute;left:72px;top:749px;width:1082px;height:21px;background:#fff"></div>
<div class="t" style="position:absolute;left:77px;top:751px;font-size:14px;line-height:1;white-space:nowrap;letter-spacing:-0.3px;color:#1414cc"><i>Commande:</i> paste</div>
<div style="position:absolute;left:72px;top:770px;width:1082px;height:1px;background:#c8c8c8"></div>
<div style="position:absolute;left:72px;top:771px;width:1082px;height:27px;background:#ececec"></div>
<div class="t" style="position:absolute;left:73px;top:779px;font-size:14px;line-height:1;white-space:nowrap;letter-spacing:-0.1px;color:#1a1a1a">Position :</div>
<div style="position:absolute;left:131px;top:776px;width:996px;height:18px;background:#fff"></div>
<div style="position:absolute;left:1127px;top:772px;width:26px;height:25px;background:linear-gradient(#f4f4f4,#e4e4e4);border:1px solid #c8c8c8;box-sizing:border-box"></div>
<div style="position:absolute;left:1155px;top:108px;width:299px;height:23px;background:linear-gradient(#eaeaea,#d8d8d8)"></div>
<div class="t" style="position:absolute;left:1276.5px;top:113.5px;font-size:11.8px;line-height:1;white-space:nowrap;color:#3a3a3a">Liste des calques</div>
<div style="position:absolute;left:1155px;top:131px;width:299px;height:25px;background:#c8c8c8"></div>
<div style="position:absolute;left:1156px;top:131px;width:58px;height:24px;background:linear-gradient(#f6f6f6,#e6e6e6)"></div>
<div style="position:absolute;left:1216px;top:131px;width:58px;height:24px;background:linear-gradient(#f6f6f6,#e6e6e6)"></div>
<div style="position:absolute;left:1275px;top:131px;width:58px;height:24px;background:linear-gradient(#f6f6f6,#e6e6e6)"></div>
<div style="position:absolute;left:1335px;top:131px;width:58px;height:24px;background:linear-gradient(#f6f6f6,#e6e6e6)"></div>
<div style="position:absolute;left:1395px;top:131px;width:58px;height:24px;background:linear-gradient(#f6f6f6,#e6e6e6)"></div>
<div style="position:absolute;left:1155px;top:156px;width:299px;height:642px;background:#fff"></div>
<div style="position:absolute;left:1155px;top:797px;width:299px;height:1px;background:#c8c8c8"></div>
<div style="position:absolute;left:1161px;top:163px;width:16px;height:9px;background:#fff;border:1px solid #000;box-sizing:border-box"></div>
<div class="t" style="position:absolute;left:1183px;top:160px;font-size:14px;line-height:1;white-space:nowrap;letter-spacing:-0.31px;color:#000">0</div>
<div style="position:absolute;left:1161px;top:183px;width:16px;height:9px;background:#f00;border:1px solid #000;box-sizing:border-box"></div>
<div class="t" style="position:absolute;left:1183px;top:180px;font-size:14px;line-height:1;white-space:nowrap;letter-spacing:-0.31px;color:#000">Centre</div>
<div style="position:absolute;left:1161px;top:203px;width:16px;height:9px;background:#000;border:1px solid #000;box-sizing:border-box"></div>
<div class="t" style="position:absolute;left:1183px;top:200px;font-size:14px;line-height:1;white-space:nowrap;letter-spacing:-0.31px;color:#000">Invisible</div>
<div style="position:absolute;left:1161px;top:223px;width:16px;height:9px;background:#000;border:1px solid #000;box-sizing:border-box"></div>
<div class="t" style="position:absolute;left:1183px;top:220px;font-size:14px;line-height:1;white-space:nowrap;letter-spacing:-0.31px;color:#000">Visible</div>
<div style="position:absolute;left:1454px;top:108px;width:46px;height:690px;background:linear-gradient(90deg,#c8c8c8 0,#c8c8c8 2%,#ececec 3%,#d8d8d8 50%,#c4c4c4 92%,#b4b4b4 94%,#c2c2c2 100%)"></div>
<svg style="position:absolute;left:1156px;top:131px;" width="298" height="25" viewBox="0 0 298 25"><g transform="translate(29,11.8) scale(1.0)"><path d="M-7.6,0.2 Q-4.5,-5.6 0,-5.6 Q4.5,-5.6 7.6,-0.2 Q4.5,5.6 0,5.6 Q-4.5,5.6 -7.6,0.2 Z" fill="#000"/><path d="M-5,0.6 Q-2.5,-2.2 0,-2.2 Q2.5,-2.2 5,0.6 Q3,4 0,4 Q-3,4 -5,0.6 Z" fill="#fff"/><circle cx="0" cy="-0.4" r="2.6" fill="#000"/><path d="M-0.6,-2.6 Q-1.2,-1 0.3,-0.2" stroke="#fff" stroke-width="0.6" fill="none"/></g><g transform="translate(89,11.8) scale(1.0)"><path d="M-7.6,0.2 Q-4.5,-5.6 0,-5.6 Q4.5,-5.6 7.6,-0.2 Q4.5,5.6 0,5.6 Q-4.5,5.6 -7.6,0.2 Z" fill="#a8a8a8"/><path d="M-5,0.6 Q-2.5,-2.2 0,-2.2 Q2.5,-2.2 5,0.6 Q3,4 0,4 Q-3,4 -5,0.6 Z" fill="#fff"/><circle cx="0" cy="-0.4" r="2.6" fill="#a8a8a8"/><path d="M-0.6,-2.6 Q-1.2,-1 0.3,-0.2" stroke="#fff" stroke-width="0.6" fill="none"/></g><path d="M143,10 h4.5 v-4.5 h3 v4.5 h4.5 v3 h-4.5 v4.5 h-3 v-4.5 h-4.5 Z" fill="#e00000" stroke="#a00000" stroke-width="0.5"/><rect x="203" y="10" width="12" height="3.6" fill="#e00000" stroke="#a00000" stroke-width="0.5"/><g transform="translate(269,11.5) rotate(-45)"><rect x="-9" y="-1.8" width="16" height="3.6" fill="#e8b040" stroke="#8a6010" stroke-width="0.6"/><path d="M-9,-1.8 L-12,0 L-9,1.8 Z" fill="#f0d8a0" stroke="#8a6010" stroke-width="0.6"/><rect x="7" y="-1.8" width="2.6" height="3.6" fill="#e02020"/></g></svg>
<svg style="position:absolute;left:1156px;top:156px;" width="298" height="90" viewBox="0 0 298 90"><g transform="translate(267,10.699999999999989) scale(1.0)"><path d="M-7.6,0.2 Q-4.5,-5.6 0,-5.6 Q4.5,-5.6 7.6,-0.2 Q4.5,5.6 0,5.6 Q-4.5,5.6 -7.6,0.2 Z" fill="#000"/><path d="M-5,0.6 Q-2.5,-2.2 0,-2.2 Q2.5,-2.2 5,0.6 Q3,4 0,4 Q-3,4 -5,0.6 Z" fill="#fff"/><circle cx="0" cy="-0.4" r="2.6" fill="#000"/><path d="M-0.6,-2.6 Q-1.2,-1 0.3,-0.2" stroke="#fff" stroke-width="0.6" fill="none"/></g><path d="M285.5,10.199999999999989 L285.5,7.699999999999989 Q285.5,4.299999999999988 289,4.299999999999988 Q292.5,4.299999999999988 292.5,7.699999999999989 L292.5,10.199999999999989" fill="none" stroke="#bcbcbc" stroke-width="1.4"/><rect x="284" y="10.399999999999988" width="10" height="7.4" fill="#bcbcbc"/><g transform="translate(267,30.69999999999999) scale(1.0)"><path d="M-7.6,0.2 Q-4.5,-5.6 0,-5.6 Q4.5,-5.6 7.6,-0.2 Q4.5,5.6 0,5.6 Q-4.5,5.6 -7.6,0.2 Z" fill="#000"/><path d="M-5,0.6 Q-2.5,-2.2 0,-2.2 Q2.5,-2.2 5,0.6 Q3,4 0,4 Q-3,4 -5,0.6 Z" fill="#fff"/><circle cx="0" cy="-0.4" r="2.6" fill="#000"/><path d="M-0.6,-2.6 Q-1.2,-1 0.3,-0.2" stroke="#fff" stroke-width="0.6" fill="none"/></g><path d="M285.5,30.19999999999999 L285.5,27.69999999999999 Q285.5,24.29999999999999 289,24.29999999999999 Q292.5,24.29999999999999 292.5,27.69999999999999 L292.5,30.19999999999999" fill="none" stroke="#bcbcbc" stroke-width="1.4"/><rect x="284" y="30.399999999999988" width="10" height="7.4" fill="#bcbcbc"/><g transform="translate(267,50.69999999999999) scale(1.0)"><path d="M-7.6,0.2 Q-4.5,-5.6 0,-5.6 Q4.5,-5.6 7.6,-0.2 Q4.5,5.6 0,5.6 Q-4.5,5.6 -7.6,0.2 Z" fill="#000"/><path d="M-5,0.6 Q-2.5,-2.2 0,-2.2 Q2.5,-2.2 5,0.6 Q3,4 0,4 Q-3,4 -5,0.6 Z" fill="#fff"/><circle cx="0" cy="-0.4" r="2.6" fill="#000"/><path d="M-0.6,-2.6 Q-1.2,-1 0.3,-0.2" stroke="#fff" stroke-width="0.6" fill="none"/></g><path d="M285.5,50.19999999999999 L285.5,47.69999999999999 Q285.5,44.29999999999999 289,44.29999999999999 Q292.5,44.29999999999999 292.5,47.69999999999999 L292.5,50.19999999999999" fill="none" stroke="#bcbcbc" stroke-width="1.4"/><rect x="284" y="50.39999999999999" width="10" height="7.4" fill="#bcbcbc"/><g transform="translate(267,70.69999999999999) scale(1.0)"><path d="M-7.6,0.2 Q-4.5,-5.6 0,-5.6 Q4.5,-5.6 7.6,-0.2 Q4.5,5.6 0,5.6 Q-4.5,5.6 -7.6,0.2 Z" fill="#000"/><path d="M-5,0.6 Q-2.5,-2.2 0,-2.2 Q2.5,-2.2 5,0.6 Q3,4 0,4 Q-3,4 -5,0.6 Z" fill="#fff"/><circle cx="0" cy="-0.4" r="2.6" fill="#000"/><path d="M-0.6,-2.6 Q-1.2,-1 0.3,-0.2" stroke="#fff" stroke-width="0.6" fill="none"/></g><path d="M285.5,70.19999999999999 L285.5,67.69999999999999 Q285.5,64.29999999999998 289,64.29999999999998 Q292.5,64.29999999999998 292.5,67.69999999999999 L292.5,70.19999999999999" fill="none" stroke="#bcbcbc" stroke-width="1.4"/><rect x="284" y="70.39999999999999" width="10" height="7.4" fill="#bcbcbc"/><g transform="translate(245,70.69999999999999) rotate(-45)"><rect x="-7" y="-1.5" width="13" height="3" fill="#e8b040" stroke="#8a6010" stroke-width="0.5"/><path d="M-7,-1.5 L-9.5,0 L-7,1.5 Z" fill="#f0d8a0" stroke="#8a6010" stroke-width="0.5"/><rect x="6" y="-1.5" width="2.4" height="3" fill="#e02020"/></g></svg>
<svg style="position:absolute;left:77px;top:115px;" width="12" height="11" viewBox="0 0 12 11"><path d="M1.5,1.5 L10,10 M10,1.5 L1.5,10" stroke="#6a6a6a" stroke-width="1.2"/></svg>
<svg style="position:absolute;left:94px;top:111px;" width="16" height="16" viewBox="0 0 16 16"><circle cx="7.5" cy="7.5" r="6.3" fill="#e8ecf4" stroke="#2a3a8a" stroke-width="1.8"/><path d="M4,5 h7 M4,8 h7 M7.5,3 v9" stroke="#8a9ac0" stroke-width="0.6"/><path d="M7,8 L13.5,14" stroke="#f0a020" stroke-width="2.2"/><path d="M12.5,13 L14.5,15" stroke="#e04040" stroke-width="2"/></svg>
<svg style="position:absolute;left:1156px;top:111px;" width="36" height="15" viewBox="0 0 36 15"><circle cx="8" cy="7" r="6.8" fill="#6e6e6e"/><path d="M5.2,4.2 L10.8,9.8 M10.8,4.2 L5.2,9.8" stroke="#e8e8e8" stroke-width="1.6"/><circle cx="26" cy="7" r="6.8" fill="#6e6e6e"/><rect x="24.3" y="3.5" width="4.5" height="3.8" fill="none" stroke="#e8e8e8" stroke-width="1"/><rect x="22.3" y="6" width="4.5" height="3.8" fill="#6e6e6e" stroke="#e8e8e8" stroke-width="1"/></svg>
<div style="position:absolute;left:1462px;top:116px;width:2px;height:2px;background:#a0a0a0"></div>
<div style="position:absolute;left:1468px;top:116px;width:2px;height:2px;background:#a0a0a0"></div>
<div style="position:absolute;left:1474px;top:116px;width:2px;height:2px;background:#a0a0a0"></div>
<div style="position:absolute;left:1480px;top:116px;width:2px;height:2px;background:#a0a0a0"></div>
<div style="position:absolute;left:1486px;top:116px;width:2px;height:2px;background:#a0a0a0"></div>
<div style="position:absolute;left:1456px;top:120px;width:42px;height:43px;background:#b6b6b6;border-radius:6px"></div>
<svg style="position:absolute;left:1462px;top:126px;" width="30" height="30" viewBox="0 0 30 30"><rect x="1.5" y="1.5" width="27" height="27" fill="#fff" stroke="#000" stroke-width="1"/><rect x="1" y="1" width="28" height="4.8" fill="#000"/><rect x="2.5" y="2" width="3" height="3" fill="#fff"/><path d="M9,12 L17,9.5 L17,21.5 L9,24 Z" fill="#b8b8b8" stroke="#444" stroke-width="0.8"/><path d="M12,11 L20.5,8 L20.5,20 L12,23 Z" fill="#e8e8e8" stroke="#555" stroke-width="0.8"/><path d="M14.5,20.5 L19,13 L19,20 Z" fill="none" stroke="#f04040" stroke-width="0.8"/></svg>
<svg style="position:absolute;left:1462px;top:173px;" width="30" height="30" viewBox="0 0 30 30"><rect x="1.5" y="1.5" width="27" height="27" fill="#fff" stroke="#000" stroke-width="1"/><rect x="1" y="1" width="28" height="4.8" fill="#000"/><rect x="2.5" y="2" width="3" height="3" fill="#fff"/><rect x="8" y="10" width="10.5" height="8" fill="#f6ecc0" stroke="#555" stroke-width="0.7"/><circle cx="19" cy="18.5" r="5" fill="#f6ecc0" stroke="#555" stroke-width="0.7"/></svg>
<svg style="position:absolute;left:1462px;top:219px;" width="30" height="30" viewBox="0 0 30 30"><rect x="1.5" y="1.5" width="27" height="27" fill="#fff" stroke="#000" stroke-width="1"/><rect x="1" y="1" width="28" height="4.8" fill="#000"/><rect x="2.5" y="2" width="3" height="3" fill="#fff"/><rect x="6.5" y="11" width="17" height="12" rx="2" fill="#f2f2f2" stroke="#b8c8e0" stroke-width="0.8"/></svg>
<svg style="position:absolute;left:1457px;top:261px;" width="42" height="1" viewBox="0 0 42 1"><rect x="0" y="0" width="1" height="1" fill="#777"/><rect x="3" y="0" width="1" height="1" fill="#777"/><rect x="6" y="0" width="1" height="1" fill="#777"/><rect x="9" y="0" width="1" height="1" fill="#777"/><rect x="12" y="0" width="1" height="1" fill="#777"/><rect x="15" y="0" width="1" height="1" fill="#777"/><rect x="18" y="0" width="1" height="1" fill="#777"/><rect x="21" y="0" width="1" height="1" fill="#777"/><rect x="24" y="0" width="1" height="1" fill="#777"/><rect x="27" y="0" width="1" height="1" fill="#777"/><rect x="30" y="0" width="1" height="1" fill="#777"/><rect x="33" y="0" width="1" height="1" fill="#777"/><rect x="36" y="0" width="1" height="1" fill="#777"/><rect x="39" y="0" width="1" height="1" fill="#777"/></svg>
<svg style="position:absolute;left:1462px;top:275px;" width="30" height="30" viewBox="0 0 30 30"><rect x="1.5" y="1.5" width="27" height="27" fill="#fff" stroke="#000" stroke-width="1"/><rect x="1" y="1" width="28" height="4.8" fill="#000"/><rect x="2.5" y="2" width="3" height="3" fill="#fff"/><rect x="5" y="10" width="4" height="3" fill="#000"/><rect x="5" y="15" width="4" height="3" fill="#000"/><rect x="5" y="20" width="4" height="3" fill="#000"/><rect x="11" y="10" width="14" height="3" fill="#fff" stroke="#000" stroke-width="0.8"/><rect x="11" y="15" width="14" height="3" fill="#fff" stroke="#000" stroke-width="0.8"/><rect x="11" y="20" width="14" height="3" fill="#fff" stroke="#000" stroke-width="0.8"/></svg>
<svg style="position:absolute;left:1462px;top:321px;" width="30" height="30" viewBox="0 0 30 30"><rect x="1.5" y="1.5" width="27" height="27" fill="#fff" stroke="#000" stroke-width="1"/><rect x="1" y="1" width="28" height="4.8" fill="#000"/><rect x="2.5" y="2" width="3" height="3" fill="#fff"/><path d="M7,10 L23,10 L17,17 L17,24 L13,24 L13,17 Z" fill="#c8c8c8" stroke="#333" stroke-width="0.8"/></svg>
<svg style="position:absolute;left:1462px;top:367px;" width="30" height="30" viewBox="0 0 30 30"><rect x="1.5" y="1.5" width="27" height="27" fill="#fff" stroke="#000" stroke-width="1"/><rect x="1" y="1" width="28" height="4.8" fill="#000"/><rect x="2.5" y="2" width="3" height="3" fill="#fff"/><path d="M8,11 L13,14 L13,21 L8,24 Z" fill="#fff" stroke="#333" stroke-width="0.8"/><rect x="13" y="13.5" width="10" height="8" rx="1" fill="#b8b8b8" stroke="#333" stroke-width="0.7"/><line x1="4" y1="17.5" x2="27" y2="17.5" stroke="#f08080" stroke-width="0.8" stroke-dasharray="1.5,1"/></svg>
<svg style="position:absolute;left:1457px;top:409px;" width="42" height="1" viewBox="0 0 42 1"><rect x="0" y="0" width="1" height="1" fill="#777"/><rect x="3" y="0" width="1" height="1" fill="#777"/><rect x="6" y="0" width="1" height="1" fill="#777"/><rect x="9" y="0" width="1" height="1" fill="#777"/><rect x="12" y="0" width="1" height="1" fill="#777"/><rect x="15" y="0" width="1" height="1" fill="#777"/><rect x="18" y="0" width="1" height="1" fill="#777"/><rect x="21" y="0" width="1" height="1" fill="#777"/><rect x="24" y="0" width="1" height="1" fill="#777"/><rect x="27" y="0" width="1" height="1" fill="#777"/><rect x="30" y="0" width="1" height="1" fill="#777"/><rect x="33" y="0" width="1" height="1" fill="#777"/><rect x="36" y="0" width="1" height="1" fill="#777"/><rect x="39" y="0" width="1" height="1" fill="#777"/></svg>
<div style="position:absolute;left:1456px;top:417px;width:42px;height:43px;background:#b6b6b6;border-radius:6px"></div>
<svg style="position:absolute;left:1462px;top:423px;" width="30" height="30" viewBox="0 0 30 30"><rect x="1.5" y="1.5" width="27" height="27" fill="#fff" stroke="#000" stroke-width="1"/><rect x="1" y="1" width="28" height="4.8" fill="#000"/><rect x="2.5" y="2" width="3" height="3" fill="#fff"/><g fill="#777"><rect x="5" y="9" width="9" height="1"/><rect x="5" y="12" width="10" height="1"/><rect x="5" y="15" width="11" height="1"/><rect x="5" y="18" width="10" height="1"/></g><line x1="2" y1="23.5" x2="28" y2="23.5" stroke="#000" stroke-width="0.8"/><g fill="#555"><rect x="4" y="25" width="3" height="1.5"/><rect x="14" y="25" width="12" height="1.5"/></g></svg>
<svg style="position:absolute;left:1462px;top:470px;" width="30" height="30" viewBox="0 0 30 30"><rect x="1.5" y="1.5" width="27" height="27" fill="#fff" stroke="#000" stroke-width="1"/><rect x="1" y="1" width="28" height="4.8" fill="#000"/><rect x="2.5" y="2" width="3" height="3" fill="#fff"/></svg>
<svg style="position:absolute;left:1469px;top:479px" width="17" height="19" viewBox="0 0 28 31"><rect x="1" y="3" width="26" height="27" rx="1" fill="#c8862a" stroke="#9c6410" stroke-width="1"/><path d="M4,6 L24,6 L24,23 L19,28 L4,28 Z" fill="#fafafa"/><path d="M19,28 L19,23.5 L24,23" fill="#a8a8a8"/><g stroke="#c4c4c4" stroke-width="1"><line x1="7" y1="10.5" x2="21" y2="10.5"/><line x1="7" y1="13.5" x2="21" y2="13.5"/><line x1="7" y1="16" x2="19" y2="16"/><line x1="7" y1="19" x2="21" y2="19"/><line x1="7" y1="22" x2="16" y2="22"/></g><path d="M8,3 Q8,1.5 10,1.5 L11.5,1.5 L11.5,0.5 L16.5,0.5 L16.5,1.5 L18,1.5 Q20,1.5 20,3 L20,7 L8,7 Z" fill="#a8a898" stroke="#7a7a70" stroke-width="0.8"/></svg>
<svg style="position:absolute;left:1133px;top:779px;" width="15" height="11" viewBox="0 0 15 11"><rect x="0.5" y="0.5" width="14" height="10" fill="#f4f4f4" stroke="#555" stroke-width="1"/><rect x="0" y="0" width="15" height="3" fill="#111"/><rect x="11" y="1" width="1" height="1" fill="#fff"/></svg>
<svg style="position:absolute;left:18px;top:294px;" width="90" height="82" viewBox="0 0 90 82"><defs><radialGradient id="hl" cx="0.5" cy="0.5" r="0.5"><stop offset="0.78" stop-color="#ffffff" stop-opacity="0.12"/><stop offset="0.83" stop-color="#a0b4c8" stop-opacity="0.35"/><stop offset="0.9" stop-color="#7890a8" stop-opacity="0.6"/><stop offset="0.96" stop-color="#8aa0b8" stop-opacity="0.45"/><stop offset="1" stop-color="#8aa0b8" stop-opacity="0"/></radialGradient><clipPath id="cvc"><rect x="77" y="0" width="20" height="82"/></clipPath><linearGradient id="rl" x1="0" x2="1"><stop offset="0" stop-color="#e04848" stop-opacity="0"/><stop offset="0.2" stop-color="#e04848" stop-opacity="0.8"/><stop offset="0.8" stop-color="#e04848" stop-opacity="0.8"/><stop offset="1" stop-color="#e04848" stop-opacity="0"/></linearGradient><linearGradient id="rv" x1="0" y1="0" x2="0" y2="1"><stop offset="0" stop-color="#e04848" stop-opacity="0"/><stop offset="0.2" stop-color="#e04848" stop-opacity="0.8"/><stop offset="0.8" stop-color="#e04848" stop-opacity="0.8"/><stop offset="1" stop-color="#e04848" stop-opacity="0"/></linearGradient></defs><circle cx="42.7" cy="40.4" r="33" fill="#eaeaea" clip-path="url(#cvc)"/><circle cx="42.7" cy="40.4" r="40" fill="url(#hl)"/><rect x="8" y="17.5" width="58" height="1.2" fill="url(#rl)"/><rect x="8" y="52" width="58" height="1.2" fill="url(#rl)"/><rect x="18" y="4" width="1.2" height="62" fill="url(#rv)"/><rect x="52" y="4" width="1.2" height="62" fill="url(#rv)"/></svg>
<div style="position:absolute;left:48px;top:364px;width:95px;height:24px;background:linear-gradient(#f6f8fa,#e2e6ec);border:1px solid #c4ccd4;border-radius:4px;box-sizing:border-box;box-shadow:0 1px 2px rgba(0,0,0,0.25)"></div>
<div class="t" style="position:absolute;left:54px;top:369.5px;font-size:13.7px;line-height:1;white-space:nowrap;color:#000">Milieu manuel</div>
<svg style="position:absolute;left:58px;top:334px;" width="22" height="32" viewBox="0 0 22 32"><path d="M3,3 L3,24.5 L8.2,19.5 L12,28 L15.8,26.4 L12.2,18.2 L18.8,18.2 Z" fill="#fff" stroke="#111" stroke-width="1.3" stroke-linejoin="round"/></svg>
<div style="position:absolute;left:0px;top:798px;width:1500px;height:46px;background:#dcdcdc"></div>
<div class="t" style="position:absolute;left:2px;top:808px;font-size:10.2px;line-height:1;white-space:nowrap;color:#111">80,70</div>
<div class="t" style="position:absolute;left:2px;top:829px;font-size:10.2px;line-height:1;white-space:nowrap;color:#111">@-50,40</div>
<div style="position:absolute;left:253px;top:802px;width:1px;height:39px;background:#a0a0a0"></div>
<div style="position:absolute;left:254px;top:802px;width:1px;height:39px;background:#f4f4f4"></div>
<div class="t" style="position:absolute;left:256px;top:808px;font-size:10.2px;line-height:1;white-space:nowrap;color:#111">106.3015&lt;41°</div>
<div class="t" style="position:absolute;left:256px;top:829px;font-size:10.2px;line-height:1;white-space:nowrap;color:#111">@64.0312&lt;141°</div>
<div class="t" style="position:absolute;left:662px;top:818px;font-size:10.2px;line-height:1;white-space:nowrap;color:#1a1a1a">Position</div>
<div class="t" style="position:absolute;left:754px;top:818px;font-size:10.2px;line-height:1;white-space:nowrap;color:#1a1a1a">Annuler</div>
<div class="t" style="position:absolute;left:949px;top:818px;font-size:10.2px;line-height:1;white-space:nowrap;color:#1a1a1a">Aucune des entités sélectionnées.</div>
<div style="position:absolute;left:507px;top:820px;width:5px;height:5px;background:#c4c4c4;border-radius:50%"></div>
<div style="position:absolute;left:941px;top:820px;width:5px;height:5px;background:#c4c4c4;border-radius:50%"></div>
<div style="position:absolute;left:1270px;top:820px;width:5px;height:5px;background:#c4c4c4;border-radius:50%"></div>
<svg style="position:absolute;left:716px;top:805px;" width="20" height="32" viewBox="0 0 20 32"><path d="M9.5,1 Q18.5,1 18.5,11 L18.5,22 Q18.5,30.5 9.5,30.5 Q0.8,30.5 0.8,22 L0.8,11 Q0.8,1 9.5,1 Z" fill="#fff" stroke="#333" stroke-width="1"/><path d="M0.8,12.5 Q9.5,10 18.5,12.5" stroke="#444" stroke-width="1.3" fill="none"/><rect x="8" y="3" width="3" height="7" rx="1.5" fill="#fff" stroke="#444" stroke-width="0.9"/><line x1="9.5" y1="1" x2="9.5" y2="3" stroke="#444" stroke-width="0.9"/></svg>
</body></html>
